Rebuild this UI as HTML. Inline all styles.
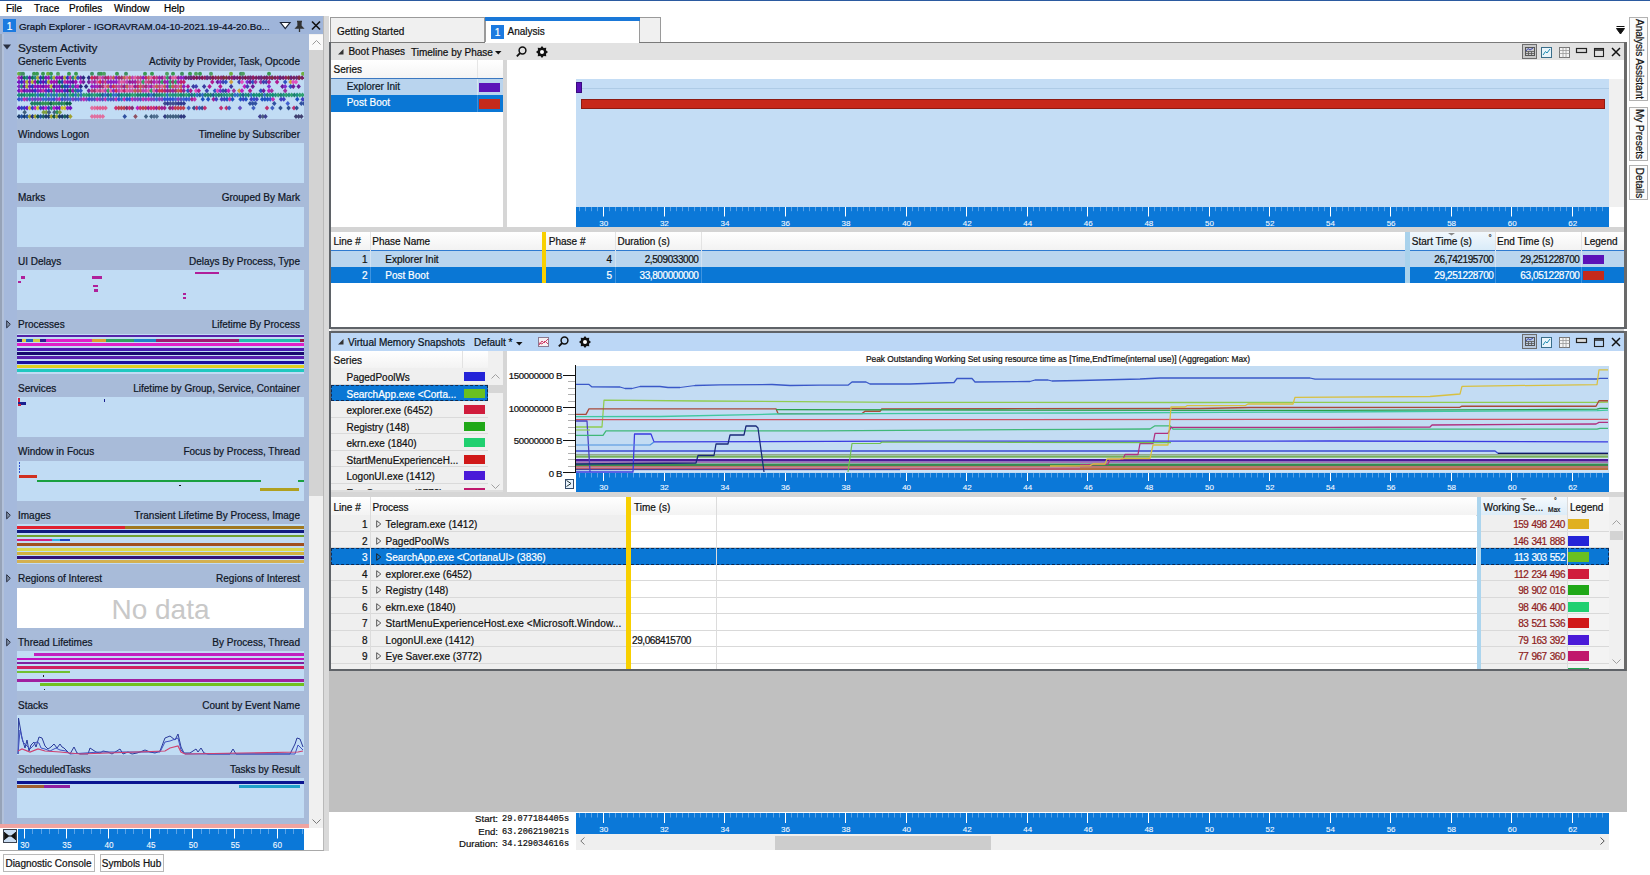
<!DOCTYPE html><html><head><meta charset="utf-8"><style>
html,body{margin:0;padding:0;}
body{width:1650px;height:875px;position:relative;overflow:hidden;background:#fff;font-family:'Liberation Sans',sans-serif;}
body>div,body>svg{position:absolute;}
.t{white-space:nowrap;line-height:1;-webkit-text-stroke:0.22px currentColor;}
svg{overflow:visible;}
</style></head><body>
<div style="left:0px;top:0px;width:1650px;height:1px;background:#2b5aa0;"></div>
<div class="t" style="left:6px;top:4.33px;font-size:10px;color:#000;font-family:'Liberation Sans';">File</div>
<div class="t" style="left:34px;top:4.33px;font-size:10px;color:#000;font-family:'Liberation Sans';">Trace</div>
<div class="t" style="left:69px;top:4.33px;font-size:10px;color:#000;font-family:'Liberation Sans';">Profiles</div>
<div class="t" style="left:114px;top:4.33px;font-size:10px;color:#000;font-family:'Liberation Sans';">Window</div>
<div class="t" style="left:164px;top:4.33px;font-size:10px;color:#000;font-family:'Liberation Sans';">Help</div>
<div style="left:0px;top:16px;width:324px;height:835px;background:#a8bbd9;"></div>
<div style="left:0px;top:16px;width:324px;height:18px;background:#9fb5da;"></div>
<div style="left:0px;top:34px;width:1.5px;height:794px;background:#96a3b8;"></div>
<div style="left:4px;top:34px;width:13px;height:790px;background:#a5b9dc;"></div>
<div style="left:1.5px;top:34px;width:2.5px;height:794px;background:#b2c1da;"></div>
<div style="left:3px;top:19px;width:13px;height:13px;background:#1c7ae0;"></div>
<div class="t" style="left:-0.5px;width:20px;text-align:center;top:22.34px;font-size:10px;color:#fff;font-family:'Liberation Sans';">1</div>
<div class="t" style="left:19px;top:22.25px;font-size:9.75px;color:#0a0f1e;font-family:'Liberation Sans';">Graph Explorer - IGORAVRAM.04-10-2021.19-44-20.Bo...</div>
<svg style="left:280px;top:22px" width="11" height="8"><path d="M0.5 0.5 L10 0.5 L5.25 6.5 Z" fill="#fff" stroke="#1a2233" stroke-width="1.2"/></svg>
<svg style="left:295px;top:21px" width="9" height="11"><path d="M2 0.5 H7 M3 0.5 V5 L1 7 H8 L6 5 V0.5 M4.5 7 V11" fill="#333" stroke="#333" stroke-width="1.3"/></svg>
<svg style="left:311px;top:21px" width="10" height="9"><path d="M1 0.5 L9 8.5 M9 0.5 L1 8.5" stroke="#111" stroke-width="1.6"/></svg>
<svg style="left:3px;top:44px" width="9" height="7"><path d="M0 0.5 H8 L4 5.5 Z" fill="#2a3040"/></svg>
<div class="t" style="left:18px;top:42.51px;font-size:11.8px;color:#0f1626;font-family:'Liberation Sans';">System Activity</div>
<div class="t" style="left:18px;top:57.33px;font-size:10px;color:#0f1626;font-family:'Liberation Sans';">Generic Events</div>
<div class="t" style="left:-300px;width:600px;text-align:right;top:57.33px;font-size:10px;color:#0f1626;font-family:'Liberation Sans';">Activity by Provider, Task, Opcode</div>
<div style="left:17px;top:71px;width:287px;height:48px;background:#c1dcf4;"></div>
<div class="t" style="left:18px;top:129.84px;font-size:10px;color:#0f1626;font-family:'Liberation Sans';">Windows Logon</div>
<div class="t" style="left:-300px;width:600px;text-align:right;top:129.84px;font-size:10px;color:#0f1626;font-family:'Liberation Sans';">Timeline by Subscriber</div>
<div style="left:17px;top:143.0px;width:287px;height:40px;background:#c1dcf4;"></div>
<div class="t" style="left:18px;top:193.34px;font-size:10px;color:#0f1626;font-family:'Liberation Sans';">Marks</div>
<div class="t" style="left:-300px;width:600px;text-align:right;top:193.34px;font-size:10px;color:#0f1626;font-family:'Liberation Sans';">Grouped By Mark</div>
<div style="left:17px;top:206.5px;width:287px;height:40px;background:#c1dcf4;"></div>
<div class="t" style="left:18px;top:256.84px;font-size:10px;color:#0f1626;font-family:'Liberation Sans';">UI Delays</div>
<div class="t" style="left:-300px;width:600px;text-align:right;top:256.84px;font-size:10px;color:#0f1626;font-family:'Liberation Sans';">Delays By Process, Type</div>
<div style="left:17px;top:270.0px;width:287px;height:40px;background:#c1dcf4;"></div>
<div class="t" style="left:18px;top:320.34px;font-size:10px;color:#0f1626;font-family:'Liberation Sans';">Processes</div>
<div class="t" style="left:-300px;width:600px;text-align:right;top:320.34px;font-size:10px;color:#0f1626;font-family:'Liberation Sans';">Lifetime By Process</div>
<svg style="left:5.5px;top:320.0px" width="5" height="9"><path d="M0.7 0.7 L4.3 4.3 L0.7 7.9 Z" fill="#8090a8" stroke="#2a3040" stroke-width="1"/></svg>
<div style="left:17px;top:333.5px;width:287px;height:40px;background:#c1dcf4;"></div>
<div class="t" style="left:18px;top:383.84px;font-size:10px;color:#0f1626;font-family:'Liberation Sans';">Services</div>
<div class="t" style="left:-300px;width:600px;text-align:right;top:383.84px;font-size:10px;color:#0f1626;font-family:'Liberation Sans';">Lifetime by Group, Service, Container</div>
<div style="left:17px;top:397.0px;width:287px;height:40px;background:#c1dcf4;"></div>
<div class="t" style="left:18px;top:447.34px;font-size:10px;color:#0f1626;font-family:'Liberation Sans';">Window in Focus</div>
<div class="t" style="left:-300px;width:600px;text-align:right;top:447.34px;font-size:10px;color:#0f1626;font-family:'Liberation Sans';">Focus by Process, Thread</div>
<div style="left:17px;top:460.5px;width:287px;height:40px;background:#c1dcf4;"></div>
<div class="t" style="left:18px;top:510.84px;font-size:10px;color:#0f1626;font-family:'Liberation Sans';">Images</div>
<div class="t" style="left:-300px;width:600px;text-align:right;top:510.84px;font-size:10px;color:#0f1626;font-family:'Liberation Sans';">Transient Lifetime By Process, Image</div>
<svg style="left:5.5px;top:510.5px" width="5" height="9"><path d="M0.7 0.7 L4.3 4.3 L0.7 7.9 Z" fill="#8090a8" stroke="#2a3040" stroke-width="1"/></svg>
<div style="left:17px;top:524.0px;width:287px;height:40px;background:#c1dcf4;"></div>
<div class="t" style="left:18px;top:574.33px;font-size:10px;color:#0f1626;font-family:'Liberation Sans';">Regions of Interest</div>
<div class="t" style="left:-300px;width:600px;text-align:right;top:574.33px;font-size:10px;color:#0f1626;font-family:'Liberation Sans';">Regions of Interest</div>
<svg style="left:5.5px;top:574.0px" width="5" height="9"><path d="M0.7 0.7 L4.3 4.3 L0.7 7.9 Z" fill="#8090a8" stroke="#2a3040" stroke-width="1"/></svg>
<div style="left:17px;top:587.5px;width:287px;height:40px;background:#ffffff;"></div>
<div class="t" style="left:18px;top:637.83px;font-size:10px;color:#0f1626;font-family:'Liberation Sans';">Thread Lifetimes</div>
<div class="t" style="left:-300px;width:600px;text-align:right;top:637.83px;font-size:10px;color:#0f1626;font-family:'Liberation Sans';">By Process, Thread</div>
<svg style="left:5.5px;top:637.5px" width="5" height="9"><path d="M0.7 0.7 L4.3 4.3 L0.7 7.9 Z" fill="#8090a8" stroke="#2a3040" stroke-width="1"/></svg>
<div style="left:17px;top:651.0px;width:287px;height:40px;background:#c1dcf4;"></div>
<div class="t" style="left:18px;top:701.33px;font-size:10px;color:#0f1626;font-family:'Liberation Sans';">Stacks</div>
<div class="t" style="left:-300px;width:600px;text-align:right;top:701.33px;font-size:10px;color:#0f1626;font-family:'Liberation Sans';">Count by Event Name</div>
<div style="left:17px;top:714.5px;width:287px;height:40px;background:#c1dcf4;"></div>
<div class="t" style="left:18px;top:764.83px;font-size:10px;color:#0f1626;font-family:'Liberation Sans';">ScheduledTasks</div>
<div class="t" style="left:-300px;width:600px;text-align:right;top:764.83px;font-size:10px;color:#0f1626;font-family:'Liberation Sans';">Tasks by Result</div>
<div style="left:17px;top:778.0px;width:287px;height:40px;background:#c1dcf4;"></div>
<div class="t" style="left:60.5px;width:200px;text-align:center;top:596.10px;font-size:28px;color:#c8c8c8;font-family:'Liberation Sans';-webkit-text-stroke:0;">No data</div>
<div style="left:309px;top:34px;width:14px;height:794px;background:#f0f0f0;"></div>
<div style="left:309px;top:35px;width:14px;height:15px;background:#fafafa;"></div>
<div style="left:309px;top:50px;width:14px;height:446px;background:#d3d3d3;"></div>
<svg style="left:312px;top:40px" width="9" height="5"><path d="M0.5 4.5 L4.5 0.5 L8.5 4.5" fill="none" stroke="#9a9a9a" stroke-width="1"/></svg>
<svg style="left:312px;top:819px" width="9" height="5"><path d="M0.5 0.5 L4.5 4.5 L8.5 0.5" fill="none" stroke="#7a7a7a" stroke-width="1"/></svg>
<div style="left:323px;top:16px;width:1px;height:835px;background:#b9b9b9;"></div>
<div style="left:0px;top:824px;width:309px;height:4px;background:#efa3a0;"></div>
<div style="left:0px;top:828px;width:323px;height:22px;background:#ffffff;"></div>
<div style="left:2px;top:828px;width:321px;height:22px;background:#ffffff;"></div>
<div style="left:3px;top:829px;width:14px;height:14px;background:#c9dcf2;box-shadow:inset 0 0 0 1px #3d4450;"></div>
<svg style="left:4px;top:831px" width="12" height="10"><path d="M0.5 1 V9 M11.5 1 V9" stroke="#222" stroke-width="1"/><path d="M1 1.5 V8.5 L5.5 5 Z M11 1.5 V8.5 L6.5 5 Z" fill="#111"/><path d="M5 5 H7" stroke="#111" stroke-width="1"/></svg>
<div style="left:0px;top:850px;width:324px;height:1px;background:#a9a9a9;"></div>
<div style="left:2.5px;top:854px;width:92px;height:18px;background:#fdfdfd;box-shadow:inset 0 0 0 1px #b8b8b8;"></div>
<div class="t" style="left:2.5px;width:92px;text-align:center;top:858.83px;font-size:10px;color:#111;font-family:'Liberation Sans';">Diagnostic Console</div>
<div style="left:99.5px;top:854px;width:64px;height:18px;background:#fdfdfd;box-shadow:inset 0 0 0 1px #b8b8b8;"></div>
<div class="t" style="left:99.5px;width:64px;text-align:center;top:858.83px;font-size:10px;color:#111;font-family:'Liberation Sans';">Symbols Hub</div>
<div style="left:324px;top:16px;width:4px;height:835px;background:#d6d6d6;"></div>
<div style="left:330px;top:17px;width:155px;height:25px;background:#f0f0f0;box-shadow:inset 1px 1px 0 #9a9a9a, inset -1px 0 0 #9a9a9a;"></div>
<div class="t" style="left:337px;top:26.94px;font-size:10px;color:#111;font-family:'Liberation Sans';">Getting Started</div>
<div style="left:485px;top:17px;width:155px;height:25px;background:#ffffff;box-shadow:inset 1px 0 0 #9a9a9a, inset -1px 0 0 #9a9a9a;"></div>
<div style="left:485px;top:17px;width:155px;height:4px;background:#1a78d8;"></div>
<div style="left:491px;top:25px;width:13px;height:14px;background:#1c7ae0;"></div>
<div class="t" style="left:487.5px;width:20px;text-align:center;top:28.34px;font-size:10px;color:#fff;font-family:'Liberation Sans';">1</div>
<div class="t" style="left:507.5px;top:27.34px;font-size:10px;color:#111;font-family:'Liberation Sans';">Analysis</div>
<div style="left:640px;top:17px;width:21px;height:25px;background:#f0f0f0;box-shadow:inset 0 1px 0 #9a9a9a, inset -1px 0 0 #9a9a9a;"></div>
<svg style="left:1616px;top:26px" width="9" height="9"><path d="M0.5 0.5 H8.5 M0.5 2.5 H8.5 L4.5 8 Z" fill="#111" stroke="#111" stroke-width="1"/></svg>
<div style="left:1629px;top:17px;width:19px;height:84px;background:#fbfbfb;box-shadow:inset 0 0 0 1px #b2b2b2;"></div>
<div class="t" style="left:1578.5px;top:53.0px;width:120px;text-align:center;font-size:10px;line-height:12px;color:#111;transform:rotate(90deg);">Analysis Assistant</div>
<div style="left:1629px;top:107px;width:19px;height:54px;background:#fbfbfb;box-shadow:inset 0 0 0 1px #b2b2b2;"></div>
<div class="t" style="left:1578.5px;top:128.0px;width:120px;text-align:center;font-size:10px;line-height:12px;color:#111;transform:rotate(90deg);">My Presets</div>
<div style="left:1629px;top:165px;width:19px;height:35px;background:#fbfbfb;box-shadow:inset 0 0 0 1px #b2b2b2;"></div>
<div class="t" style="left:1578.5px;top:176.5px;width:120px;text-align:center;font-size:10px;line-height:12px;color:#111;transform:rotate(90deg);">Details</div>
<div style="left:331px;top:42px;width:1293px;height:286px;background:#ffffff;"></div>
<div style="left:329px;top:42px;width:156px;height:1px;background:#7a7a7a;"></div>
<div style="left:639px;top:42px;width:987px;height:1px;background:#7a7a7a;"></div>
<div style="left:331px;top:43px;width:1293px;height:17px;background:#e2e2e2;"></div>
<svg style="left:338px;top:49px" width="6" height="6"><path d="M5.5 0 V5.5 H0 Z" fill="#333"/></svg>
<div class="t" style="left:348.4px;top:46.94px;font-size:10px;color:#111;font-family:'Liberation Sans';">Boot Phases</div>
<div class="t" style="left:411px;top:47.83px;font-size:10px;color:#111;font-family:'Liberation Sans';">Timeline by Phase</div>
<svg style="left:495px;top:51px" width="7" height="4"><path d="M0 0 H6.5 L3.25 3.5 Z" fill="#111"/></svg>
<svg style="left:516px;top:46px" width="11" height="11"><circle cx="6.5" cy="4.5" r="3.4" fill="none" stroke="#111" stroke-width="1.5"/><path d="M4.2 7 L0.8 10.4" stroke="#111" stroke-width="1.8"/></svg>
<svg style="left:536px;top:46px" width="12" height="12"><polygon points="12.00,6.00 9.97,7.65 10.24,10.24 7.65,9.97 6.00,12.00 4.35,9.97 1.76,10.24 2.03,7.65 0.00,6.00 2.03,4.35 1.76,1.76 4.35,2.03 6.00,0.00 7.65,2.03 10.24,1.76 9.97,4.35" fill="#111"/><circle cx="6" cy="6" r="2" fill="#fff"/></svg>
<div style="left:1522px;top:44px;width:15px;height:15px;background:#c8c8c8;box-shadow:inset 0 0 0 1px #6d6d6d;"></div>
<svg style="left:1525px;top:47px" width="10" height="9"><rect x="0.5" y="0.5" width="9" height="8" fill="none" stroke="#555" stroke-width="1"/><path d="M0.5 4.5 H9.5 M3.5 4.5 V8.5 M6.5 4.5 V8.5 M0.5 6.5 H9.5" stroke="#555" stroke-width="0.8"/><path d="M1 4 L3 1.5 L5 3 L8 1" fill="none" stroke="#3c48b0" stroke-width="1"/></svg>
<svg style="left:1541px;top:47px" width="11" height="11"><rect x="0.5" y="0.5" width="10" height="10" fill="#e8f4fb" stroke="#3a6e8a" stroke-width="1"/><path d="M2 8 L4.5 4.5 L6 6 L9 2" fill="none" stroke="#1a8ab0" stroke-width="1"/></svg>
<svg style="left:1559px;top:47px" width="11" height="11"><rect x="0.5" y="0.5" width="10" height="10" fill="#f4f4f4" stroke="#777" stroke-width="1"/><path d="M0.5 3.5 H10.5 M0.5 6.5 H10.5 M4 0.5 V10.5 M7 0.5 V10.5" stroke="#999" stroke-width="0.8"/></svg>
<svg style="left:1576px;top:48px" width="11" height="6"><rect x="0.5" y="0.5" width="10" height="4" fill="#ddd" stroke="#222" stroke-width="1.2"/></svg>
<svg style="left:1594px;top:48px" width="10" height="9"><rect x="0.5" y="0.5" width="9" height="8" fill="none" stroke="#222" stroke-width="1.1"/><path d="M0.5 2 H9.5" stroke="#222" stroke-width="1.5"/></svg>
<svg style="left:1611px;top:47px" width="10" height="10"><path d="M1 1 L9 9 M9 1 L1 9" stroke="#111" stroke-width="1.5"/></svg>
<div style="left:331px;top:60px;width:172px;height:18px;background:#fdfdfd;background:linear-gradient(#ffffff,#f4f4f4);"></div>
<div style="left:477px;top:60px;width:1px;height:18px;background:#e6e6e6;"></div>
<div class="t" style="left:333.6px;top:64.63px;font-size:10px;color:#111;font-family:'Liberation Sans';">Series</div>
<div style="left:331px;top:78px;width:172px;height:1px;background:#3c78c0;"></div>
<div style="left:331px;top:79px;width:172px;height:16px;background:#b9d4ee;"></div>
<div class="t" style="left:346.7px;top:81.73px;font-size:10px;color:#0d1a2a;font-family:'Liberation Sans';">Explorer Init</div>
<div style="left:478.5px;top:82.5px;width:21.5px;height:9.5px;background:#5b12b8;"></div>
<div style="left:331px;top:95px;width:172px;height:17px;background:#0a77d5;"></div>
<div class="t" style="left:346.7px;top:98.33px;font-size:10px;color:#ffffff;font-family:'Liberation Sans';">Post Boot</div>
<div style="left:478.5px;top:99px;width:21.5px;height:9.5px;background:#c42a1c;"></div>
<div style="left:477px;top:79px;width:1px;height:16px;background:#d7e4f0;"></div>
<div style="left:477px;top:95px;width:1px;height:17px;background:#3d8fdc;"></div>
<div style="left:503px;top:60px;width:4px;height:167px;background:#d6d6d6;"></div>
<div style="left:576px;top:79px;width:1033px;height:128px;background:#c4ddf5;"></div>
<div style="left:576px;top:88px;width:1033px;height:1px;background:#aecbe6;"></div>
<div style="left:576px;top:82px;width:6px;height:10.5px;background:#5a10b6;box-shadow:inset 0 0 0 1px #3a0a80;"></div>
<div style="left:581px;top:99px;width:1024px;height:10px;background:#c7281b;box-shadow:inset 0 0 0 1px #8e1a12;"></div>
<div style="left:1609px;top:79px;width:15px;height:128px;background:#f0f0f0;"></div>
<div style="left:576px;top:207px;width:1033px;height:20px;background:#0b78d8;"></div>
<svg style="left:576px;top:207px" width="1033" height="20"><path d="M3.5 0 V4.2 M9.5 0 V4.2 M15.5 0 V4.2 M21.5 0 V4.2 M33.5 0 V4.2 M39.5 0 V4.2 M45.5 0 V4.2 M51.5 0 V4.2 M57.5 0 V4.2 M63.5 0 V4.2 M69.5 0 V4.2 M75.5 0 V4.2 M81.5 0 V4.2 M94.5 0 V4.2 M100.5 0 V4.2 M106.5 0 V4.2 M112.5 0 V4.2 M118.5 0 V4.2 M124.5 0 V4.2 M130.5 0 V4.2 M136.5 0 V4.2 M142.5 0 V4.2 M154.5 0 V4.2 M160.5 0 V4.2 M166.5 0 V4.2 M172.5 0 V4.2 M178.5 0 V4.2 M184.5 0 V4.2 M190.5 0 V4.2 M197.5 0 V4.2 M203.5 0 V4.2 M215.5 0 V4.2 M221.5 0 V4.2 M227.5 0 V4.2 M233.5 0 V4.2 M239.5 0 V4.2 M245.5 0 V4.2 M251.5 0 V4.2 M257.5 0 V4.2 M263.5 0 V4.2 M275.5 0 V4.2 M281.5 0 V4.2 M287.5 0 V4.2 M293.5 0 V4.2 M299.5 0 V4.2 M306.5 0 V4.2 M312.5 0 V4.2 M318.5 0 V4.2 M324.5 0 V4.2 M336.5 0 V4.2 M342.5 0 V4.2 M348.5 0 V4.2 M354.5 0 V4.2 M360.5 0 V4.2 M366.5 0 V4.2 M372.5 0 V4.2 M378.5 0 V4.2 M384.5 0 V4.2 M396.5 0 V4.2 M402.5 0 V4.2 M408.5 0 V4.2 M415.5 0 V4.2 M421.5 0 V4.2 M427.5 0 V4.2 M433.5 0 V4.2 M439.5 0 V4.2 M445.5 0 V4.2 M457.5 0 V4.2 M463.5 0 V4.2 M469.5 0 V4.2 M475.5 0 V4.2 M481.5 0 V4.2 M487.5 0 V4.2 M493.5 0 V4.2 M499.5 0 V4.2 M505.5 0 V4.2 M517.5 0 V4.2 M524.5 0 V4.2 M530.5 0 V4.2 M536.5 0 V4.2 M542.5 0 V4.2 M548.5 0 V4.2 M554.5 0 V4.2 M560.5 0 V4.2 M566.5 0 V4.2 M578.5 0 V4.2 M584.5 0 V4.2 M590.5 0 V4.2 M596.5 0 V4.2 M602.5 0 V4.2 M608.5 0 V4.2 M614.5 0 V4.2 M620.5 0 V4.2 M626.5 0 V4.2 M639.5 0 V4.2 M645.5 0 V4.2 M651.5 0 V4.2 M657.5 0 V4.2 M663.5 0 V4.2 M669.5 0 V4.2 M675.5 0 V4.2 M681.5 0 V4.2 M687.5 0 V4.2 M699.5 0 V4.2 M705.5 0 V4.2 M711.5 0 V4.2 M717.5 0 V4.2 M723.5 0 V4.2 M729.5 0 V4.2 M736.5 0 V4.2 M742.5 0 V4.2 M748.5 0 V4.2 M760.5 0 V4.2 M766.5 0 V4.2 M772.5 0 V4.2 M778.5 0 V4.2 M784.5 0 V4.2 M790.5 0 V4.2 M796.5 0 V4.2 M802.5 0 V4.2 M808.5 0 V4.2 M820.5 0 V4.2 M826.5 0 V4.2 M832.5 0 V4.2 M838.5 0 V4.2 M845.5 0 V4.2 M851.5 0 V4.2 M857.5 0 V4.2 M863.5 0 V4.2 M869.5 0 V4.2 M881.5 0 V4.2 M887.5 0 V4.2 M893.5 0 V4.2 M899.5 0 V4.2 M905.5 0 V4.2 M911.5 0 V4.2 M917.5 0 V4.2 M923.5 0 V4.2 M929.5 0 V4.2 M941.5 0 V4.2 M947.5 0 V4.2 M954.5 0 V4.2 M960.5 0 V4.2 M966.5 0 V4.2 M972.5 0 V4.2 M978.5 0 V4.2 M984.5 0 V4.2 M990.5 0 V4.2 M1002.5 0 V4.2 M1008.5 0 V4.2 M1014.5 0 V4.2 M1020.5 0 V4.2 M1026.5 0 V4.2" stroke="#5aa2e6" stroke-width="1"/><path d="M27.5 0 V9.5 M88.5 0 V9.5 M148.5 0 V9.5 M209.5 0 V9.5 M269.5 0 V9.5 M330.5 0 V9.5 M390.5 0 V9.5 M451.5 0 V9.5 M511.5 0 V9.5 M572.5 0 V9.5 M633.5 0 V9.5 M693.5 0 V9.5 M754.5 0 V9.5 M814.5 0 V9.5 M875.5 0 V9.5 M935.5 0 V9.5 M996.5 0 V9.5" stroke="#ffffff" stroke-width="1"/></svg>
<div class="t" style="left:588.8px;width:30px;text-align:center;top:219.83px;font-size:8px;color:#f4f9ff;font-family:'Liberation Sans';-webkit-text-stroke:0.1px currentColor;">30</div>
<div class="t" style="left:649.3599999999999px;width:30px;text-align:center;top:219.83px;font-size:8px;color:#f4f9ff;font-family:'Liberation Sans';-webkit-text-stroke:0.1px currentColor;">32</div>
<div class="t" style="left:709.92px;width:30px;text-align:center;top:219.83px;font-size:8px;color:#f4f9ff;font-family:'Liberation Sans';-webkit-text-stroke:0.1px currentColor;">34</div>
<div class="t" style="left:770.48px;width:30px;text-align:center;top:219.83px;font-size:8px;color:#f4f9ff;font-family:'Liberation Sans';-webkit-text-stroke:0.1px currentColor;">36</div>
<div class="t" style="left:831.04px;width:30px;text-align:center;top:219.83px;font-size:8px;color:#f4f9ff;font-family:'Liberation Sans';-webkit-text-stroke:0.1px currentColor;">38</div>
<div class="t" style="left:891.5999999999999px;width:30px;text-align:center;top:219.83px;font-size:8px;color:#f4f9ff;font-family:'Liberation Sans';-webkit-text-stroke:0.1px currentColor;">40</div>
<div class="t" style="left:952.16px;width:30px;text-align:center;top:219.83px;font-size:8px;color:#f4f9ff;font-family:'Liberation Sans';-webkit-text-stroke:0.1px currentColor;">42</div>
<div class="t" style="left:1012.72px;width:30px;text-align:center;top:219.83px;font-size:8px;color:#f4f9ff;font-family:'Liberation Sans';-webkit-text-stroke:0.1px currentColor;">44</div>
<div class="t" style="left:1073.28px;width:30px;text-align:center;top:219.83px;font-size:8px;color:#f4f9ff;font-family:'Liberation Sans';-webkit-text-stroke:0.1px currentColor;">46</div>
<div class="t" style="left:1133.84px;width:30px;text-align:center;top:219.83px;font-size:8px;color:#f4f9ff;font-family:'Liberation Sans';-webkit-text-stroke:0.1px currentColor;">48</div>
<div class="t" style="left:1194.4px;width:30px;text-align:center;top:219.83px;font-size:8px;color:#f4f9ff;font-family:'Liberation Sans';-webkit-text-stroke:0.1px currentColor;">50</div>
<div class="t" style="left:1254.96px;width:30px;text-align:center;top:219.83px;font-size:8px;color:#f4f9ff;font-family:'Liberation Sans';-webkit-text-stroke:0.1px currentColor;">52</div>
<div class="t" style="left:1315.52px;width:30px;text-align:center;top:219.83px;font-size:8px;color:#f4f9ff;font-family:'Liberation Sans';-webkit-text-stroke:0.1px currentColor;">54</div>
<div class="t" style="left:1376.08px;width:30px;text-align:center;top:219.83px;font-size:8px;color:#f4f9ff;font-family:'Liberation Sans';-webkit-text-stroke:0.1px currentColor;">56</div>
<div class="t" style="left:1436.6399999999999px;width:30px;text-align:center;top:219.83px;font-size:8px;color:#f4f9ff;font-family:'Liberation Sans';-webkit-text-stroke:0.1px currentColor;">58</div>
<div class="t" style="left:1497.2px;width:30px;text-align:center;top:219.83px;font-size:8px;color:#f4f9ff;font-family:'Liberation Sans';-webkit-text-stroke:0.1px currentColor;">60</div>
<div class="t" style="left:1557.76px;width:30px;text-align:center;top:219.83px;font-size:8px;color:#f4f9ff;font-family:'Liberation Sans';-webkit-text-stroke:0.1px currentColor;">62</div>
<div style="left:331px;top:227px;width:1293px;height:5px;background:#d4d4d4;"></div>
<div style="left:331px;top:232px;width:1293px;height:18px;background:#fafafa;background:linear-gradient(#ffffff,#f2f2f2);"></div>
<div style="left:331px;top:250px;width:1293px;height:1px;background:#2f7ad0;"></div>
<div style="left:370px;top:232px;width:1px;height:51px;background:#e3e3e3;"></div>
<div style="left:614.5px;top:232px;width:1px;height:51px;background:#e3e3e3;"></div>
<div style="left:700.5px;top:232px;width:1px;height:51px;background:#e3e3e3;"></div>
<div style="left:1495px;top:232px;width:1px;height:51px;background:#e3e3e3;"></div>
<div style="left:1581px;top:232px;width:1px;height:51px;background:#e3e3e3;"></div>
<div style="left:1410px;top:232px;width:85px;height:18px;background:#e4f0fa;background:linear-gradient(#f2f8fd,#d9ebf8);"></div>
<div class="t" style="left:333.5px;top:237.03px;font-size:10px;color:#111;font-family:'Liberation Sans';">Line #</div>
<div class="t" style="left:372.3px;top:237.03px;font-size:10px;color:#111;font-family:'Liberation Sans';">Phase Name</div>
<div class="t" style="left:548.8px;top:237.03px;font-size:10px;color:#111;font-family:'Liberation Sans';">Phase #</div>
<div class="t" style="left:617.5px;top:237.03px;font-size:10px;color:#111;font-family:'Liberation Sans';">Duration (s)</div>
<div class="t" style="left:1411.8px;top:237.03px;font-size:10px;color:#111;font-family:'Liberation Sans';">Start Time (s)</div>
<div class="t" style="left:1497px;top:237.03px;font-size:10px;color:#111;font-family:'Liberation Sans';">End Time (s)</div>
<div class="t" style="left:1584.2px;top:237.03px;font-size:10px;color:#111;font-family:'Liberation Sans';">Legend</div>
<svg style="left:1448px;top:233px" width="8" height="3"><path d="M0 0 H7 L3.5 2.5 Z" fill="#888"/></svg>
<div class="t" style="left:1485.0px;width:10px;text-align:center;top:234.03px;font-size:8px;color:#333;font-family:'Liberation Sans';">°</div>
<div style="left:331px;top:251px;width:1074px;height:16px;background:#bad5ee;"></div>
<div style="left:1410px;top:251px;width:214px;height:16px;background:#bad5ee;"></div>
<div style="left:331px;top:267px;width:1074px;height:16px;background:#0a77d5;"></div>
<div style="left:1410px;top:267px;width:214px;height:16px;background:#0a77d5;"></div>
<div style="left:370px;top:251px;width:1px;height:16px;background:#d2e2f2;"></div>
<div style="left:370px;top:267px;width:1px;height:16px;background:#3f94e0;"></div>
<div style="left:614.5px;top:251px;width:1px;height:16px;background:#d2e2f2;"></div>
<div style="left:614.5px;top:267px;width:1px;height:16px;background:#3f94e0;"></div>
<div style="left:700.5px;top:251px;width:1px;height:16px;background:#d2e2f2;"></div>
<div style="left:700.5px;top:267px;width:1px;height:16px;background:#3f94e0;"></div>
<div style="left:1495px;top:251px;width:1px;height:16px;background:#d2e2f2;"></div>
<div style="left:1495px;top:267px;width:1px;height:16px;background:#3f94e0;"></div>
<div style="left:1581px;top:251px;width:1px;height:16px;background:#d2e2f2;"></div>
<div style="left:1581px;top:267px;width:1px;height:16px;background:#3f94e0;"></div>
<div class="t" style="left:-232.5px;width:600px;text-align:right;top:254.64px;font-size:10px;color:#111;font-family:'Liberation Sans';">1</div>
<div class="t" style="left:-232.5px;width:600px;text-align:right;top:271.14px;font-size:10px;color:#fff;font-family:'Liberation Sans';">2</div>
<div class="t" style="left:385.3px;top:254.64px;font-size:10px;color:#111;font-family:'Liberation Sans';">Explorer Init</div>
<div class="t" style="left:385.3px;top:271.14px;font-size:10px;color:#fff;font-family:'Liberation Sans';">Post Boot</div>
<div class="t" style="left:12px;width:600px;text-align:right;top:254.64px;font-size:10px;color:#111;font-family:'Liberation Sans';">4</div>
<div class="t" style="left:12px;width:600px;text-align:right;top:271.14px;font-size:10px;color:#fff;font-family:'Liberation Sans';">5</div>
<div class="t" style="left:98.5px;width:600px;text-align:right;top:254.64px;font-size:10px;color:#111;font-family:'Liberation Sans';letter-spacing:-0.42px;">2,509033000</div>
<div class="t" style="left:98.5px;width:600px;text-align:right;top:271.14px;font-size:10px;color:#fff;font-family:'Liberation Sans';letter-spacing:-0.42px;">33,800000000</div>
<div class="t" style="left:893.5px;width:600px;text-align:right;top:254.64px;font-size:10px;color:#111;font-family:'Liberation Sans';letter-spacing:-0.4px;">26,742195700</div>
<div class="t" style="left:893.5px;width:600px;text-align:right;top:271.14px;font-size:10px;color:#fff;font-family:'Liberation Sans';letter-spacing:-0.4px;">29,251228700</div>
<div class="t" style="left:979.5px;width:600px;text-align:right;top:254.64px;font-size:10px;color:#111;font-family:'Liberation Sans';letter-spacing:-0.4px;">29,251228700</div>
<div class="t" style="left:979.5px;width:600px;text-align:right;top:271.14px;font-size:10px;color:#fff;font-family:'Liberation Sans';letter-spacing:-0.4px;">63,051228700</div>
<div style="left:1583px;top:254.5px;width:20.5px;height:9.5px;background:#5b12b8;"></div>
<div style="left:1583px;top:270.5px;width:20.5px;height:9.5px;background:#c42a1c;"></div>
<div style="left:542px;top:232px;width:4px;height:51px;background:#f8d000;"></div>
<div style="left:1405px;top:232px;width:5px;height:51px;background:#a9d2ec;"></div>
<div style="left:329px;top:42px;width:2px;height:286.5px;background:#5f6368;"></div>
<div style="left:1624px;top:42px;width:2.5px;height:286.5px;background:#6a6a6a;"></div>
<div style="left:329px;top:326.5px;width:1297px;height:2px;background:#5f6368;"></div>
<div style="left:331px;top:328.5px;width:1293px;height:2.5px;background:#d2d2d2;"></div>
<div style="left:323.5px;top:16px;width:5px;height:835px;background:#d9d9d9;"></div>
<div style="left:331px;top:333px;width:1293px;height:338px;background:#ffffff;"></div>
<div style="left:329px;top:331px;width:1297px;height:2px;background:#5f6368;"></div>
<div style="left:331px;top:333px;width:1293px;height:18px;background:#bcd7f6;"></div>
<svg style="left:338px;top:339px" width="6" height="6"><path d="M5.5 0 V5.5 H0 Z" fill="#333"/></svg>
<div class="t" style="left:348px;top:337.84px;font-size:10px;color:#0b1422;font-family:'Liberation Sans';">Virtual Memory Snapshots</div>
<div class="t" style="left:474px;top:338.34px;font-size:10px;color:#0b1422;font-family:'Liberation Sans';">Default *</div>
<svg style="left:516px;top:342px" width="7" height="4"><path d="M0 0 H6.5 L3.25 3.5 Z" fill="#111"/></svg>
<svg style="left:538px;top:337px" width="11" height="10"><rect x="0.5" y="0.5" width="10" height="9" fill="#f6eef2" stroke="#8a7a90" stroke-width="1"/><path d="M1 8 L4 4 L6 6 L10 2 M1 6 L4 7 L7 4 L10 7" fill="none" stroke="#d0406a" stroke-width="1"/></svg>
<svg style="left:558px;top:336px" width="11" height="11"><circle cx="6.5" cy="4.5" r="3.4" fill="none" stroke="#111" stroke-width="1.5"/><path d="M4.2 7 L0.8 10.4" stroke="#111" stroke-width="1.8"/></svg>
<svg style="left:579px;top:336px" width="12" height="12"><polygon points="12.00,6.00 9.97,7.65 10.24,10.24 7.65,9.97 6.00,12.00 4.35,9.97 1.76,10.24 2.03,7.65 0.00,6.00 2.03,4.35 1.76,1.76 4.35,2.03 6.00,0.00 7.65,2.03 10.24,1.76 9.97,4.35" fill="#111"/><circle cx="6" cy="6" r="2" fill="#fff"/></svg>
<div style="left:1522px;top:334px;width:15px;height:15px;background:#b9c9de;box-shadow:inset 0 0 0 1px #6d6d6d;"></div>
<svg style="left:1525px;top:337px" width="10" height="9"><rect x="0.5" y="0.5" width="9" height="8" fill="none" stroke="#555" stroke-width="1"/><path d="M0.5 4.5 H9.5 M3.5 4.5 V8.5 M6.5 4.5 V8.5 M0.5 6.5 H9.5" stroke="#555" stroke-width="0.8"/><path d="M1 4 L3 1.5 L5 3 L8 1" fill="none" stroke="#3c48b0" stroke-width="1"/></svg>
<svg style="left:1541px;top:337px" width="11" height="11"><rect x="0.5" y="0.5" width="10" height="10" fill="#e8f4fb" stroke="#3a6e8a" stroke-width="1"/><path d="M2 8 L4.5 4.5 L6 6 L9 2" fill="none" stroke="#1a8ab0" stroke-width="1"/></svg>
<svg style="left:1559px;top:337px" width="11" height="11"><rect x="0.5" y="0.5" width="10" height="10" fill="#f4f4f4" stroke="#777" stroke-width="1"/><path d="M0.5 3.5 H10.5 M0.5 6.5 H10.5 M4 0.5 V10.5 M7 0.5 V10.5" stroke="#999" stroke-width="0.8"/></svg>
<svg style="left:1576px;top:338px" width="11" height="6"><rect x="0.5" y="0.5" width="10" height="4" fill="#ddd" stroke="#222" stroke-width="1.2"/></svg>
<svg style="left:1594px;top:338px" width="10" height="9"><rect x="0.5" y="0.5" width="9" height="8" fill="none" stroke="#222" stroke-width="1.1"/><path d="M0.5 2 H9.5" stroke="#222" stroke-width="1.5"/></svg>
<svg style="left:1611px;top:337px" width="10" height="10"><path d="M1 1 L9 9 M9 1 L1 9" stroke="#111" stroke-width="1.5"/></svg>
<div style="left:331px;top:351px;width:157px;height:17px;background:#fbfbfb;background:linear-gradient(#ffffff,#f3f3f3);"></div>
<div style="left:462px;top:351px;width:1px;height:141px;background:#e2e2e2;"></div>
<div class="t" style="left:333.6px;top:355.64px;font-size:10px;color:#111;font-family:'Liberation Sans';">Series</div>
<div style="left:331px;top:368px;width:157px;height:17px;background:#efefef;"></div>
<div style="left:331px;top:384px;width:157px;height:1px;background:#dadada;"></div>
<div class="t" style="left:346.5px;top:372.84px;font-size:10px;color:#111;font-family:'Liberation Sans';">PagedPoolWs</div>
<div style="left:464px;top:371.5px;width:21px;height:9.5px;background:#2424d8;"></div>
<div style="left:331px;top:385px;width:157px;height:16px;background:#0a77d5;"></div>
<div class="t" style="left:346.5px;top:389.84px;font-size:10px;color:#fff;font-family:'Liberation Sans';">SearchApp.exe &lt;Corta...</div>
<div style="left:464px;top:388.5px;width:21px;height:9.5px;background:#6ac020;"></div>
<div style="left:331px;top:385px;width:157px;height:16px;box-sizing:border-box;border:1px dashed #0d2a55;"></div>
<div style="left:331px;top:401px;width:157px;height:17px;background:#efefef;"></div>
<div style="left:331px;top:417px;width:157px;height:1px;background:#dadada;"></div>
<div class="t" style="left:346.5px;top:405.84px;font-size:10px;color:#111;font-family:'Liberation Sans';">explorer.exe (6452)</div>
<div style="left:464px;top:404.5px;width:21px;height:9.5px;background:#d01c3c;"></div>
<div style="left:331px;top:418px;width:157px;height:16px;background:#efefef;"></div>
<div style="left:331px;top:433px;width:157px;height:1px;background:#dadada;"></div>
<div class="t" style="left:346.5px;top:422.84px;font-size:10px;color:#111;font-family:'Liberation Sans';">Registry (148)</div>
<div style="left:464px;top:421.5px;width:21px;height:9.5px;background:#20a818;"></div>
<div style="left:331px;top:434px;width:157px;height:17px;background:#efefef;"></div>
<div style="left:331px;top:450px;width:157px;height:1px;background:#dadada;"></div>
<div class="t" style="left:346.5px;top:438.84px;font-size:10px;color:#111;font-family:'Liberation Sans';">ekrn.exe (1840)</div>
<div style="left:464px;top:437.5px;width:21px;height:9.5px;background:#20d070;"></div>
<div style="left:331px;top:451px;width:157px;height:16px;background:#efefef;"></div>
<div style="left:331px;top:466px;width:157px;height:1px;background:#dadada;"></div>
<div class="t" style="left:346.5px;top:455.84px;font-size:10px;color:#111;font-family:'Liberation Sans';">StartMenuExperienceH...</div>
<div style="left:464px;top:454.5px;width:21px;height:9.5px;background:#d01818;"></div>
<div style="left:331px;top:467px;width:157px;height:17px;background:#efefef;"></div>
<div style="left:331px;top:483px;width:157px;height:1px;background:#dadada;"></div>
<div class="t" style="left:346.5px;top:471.84px;font-size:10px;color:#111;font-family:'Liberation Sans';">LogonUI.exe (1412)</div>
<div style="left:464px;top:470.5px;width:21px;height:9.5px;background:#4a1ad8;"></div>
<div style="left:331px;top:484px;width:157px;height:8px;background:#efefef;"></div>
<div class="t" style="left:346.5px;top:488.84px;font-size:10px;color:#111;font-family:'Liberation Sans';">Eye Saver.exe (3772)</div>
<div style="left:464px;top:487.5px;width:21px;height:9.5px;background:#c0186c;"></div>
<div style="left:488px;top:351px;width:15px;height:141px;background:#f0f0f0;"></div>
<div style="left:488px;top:385px;width:15px;height:8px;background:#d6d6d6;"></div>
<svg style="left:491px;top:374px" width="9" height="5"><path d="M0.5 4.5 L4.5 0.5 L8.5 4.5" fill="none" stroke="#a0a0a0" stroke-width="1"/></svg>
<svg style="left:491px;top:484px" width="9" height="5"><path d="M0.5 0.5 L4.5 4.5 L8.5 0.5" fill="none" stroke="#a0a0a0" stroke-width="1"/></svg>
<div style="left:331px;top:490px;width:172px;height:2px;background:#dedede;"></div>
<div style="left:503px;top:351px;width:4px;height:141px;background:#d6d6d6;"></div>
<div class="t" style="left:758.0px;width:600px;text-align:center;top:354.69px;font-size:8.4px;color:#111;font-family:'Liberation Sans';">Peak Outstanding Working Set using resource time as [Time,EndTime(internal use)] (Aggregation: Max)</div>
<div style="left:576px;top:365.5px;width:1033px;height:107px;background:#c3dcf3;"></div>
<div style="left:575px;top:365px;width:1px;height:108px;background:#111;"></div>
<div style="left:563px;top:374.5px;width:12px;height:1.2px;background:#111;"></div>
<div class="t" style="left:-38px;width:600px;text-align:right;top:371.27px;font-size:9.6px;color:#111;font-family:'Liberation Sans';letter-spacing:-0.35px;">150000000 B</div>
<div style="left:563px;top:407.0px;width:12px;height:1.2px;background:#111;"></div>
<div class="t" style="left:-38px;width:600px;text-align:right;top:403.77px;font-size:9.6px;color:#111;font-family:'Liberation Sans';letter-spacing:-0.35px;">100000000 B</div>
<div style="left:563px;top:439.5px;width:12px;height:1.2px;background:#111;"></div>
<div class="t" style="left:-38px;width:600px;text-align:right;top:436.27px;font-size:9.6px;color:#111;font-family:'Liberation Sans';letter-spacing:-0.35px;">50000000 B</div>
<div style="left:563px;top:472.0px;width:12px;height:1.2px;background:#111;"></div>
<div class="t" style="left:-38px;width:600px;text-align:right;top:468.77px;font-size:9.6px;color:#111;font-family:'Liberation Sans';letter-spacing:-0.35px;">0 B</div>
<div style="left:568px;top:465.5px;width:7px;height:1px;background:#b0b0b0;"></div>
<div style="left:568px;top:459.0px;width:7px;height:1px;background:#b0b0b0;"></div>
<div style="left:568px;top:452.5px;width:7px;height:1px;background:#b0b0b0;"></div>
<div style="left:568px;top:446.0px;width:7px;height:1px;background:#b0b0b0;"></div>
<div style="left:568px;top:433.0px;width:7px;height:1px;background:#b0b0b0;"></div>
<div style="left:568px;top:426.5px;width:7px;height:1px;background:#b0b0b0;"></div>
<div style="left:568px;top:420.0px;width:7px;height:1px;background:#b0b0b0;"></div>
<div style="left:568px;top:413.5px;width:7px;height:1px;background:#b0b0b0;"></div>
<div style="left:568px;top:400.5px;width:7px;height:1px;background:#b0b0b0;"></div>
<div style="left:568px;top:394.0px;width:7px;height:1px;background:#b0b0b0;"></div>
<div style="left:568px;top:387.5px;width:7px;height:1px;background:#b0b0b0;"></div>
<div style="left:568px;top:381.0px;width:7px;height:1px;background:#b0b0b0;"></div>
<div style="left:564.5px;top:478.5px;width:9px;height:10px;background:#e8f2fc;box-shadow:inset 0 0 0 1px #324a6a;"></div>
<svg style="left:566px;top:480px" width="6" height="7"><path d="M0.5 0.5 L5 3.5 L0.5 6.5" fill="none" stroke="#233" stroke-width="1"/></svg>
<div style="left:576px;top:472.5px;width:1033px;height:19.5px;background:#0b78d8;"></div>
<svg style="left:576px;top:472.5px" width="1033" height="19.5"><path d="M3.5 0 V4.5 M9.5 0 V4.5 M15.5 0 V4.5 M21.5 0 V4.5 M33.5 0 V4.5 M39.5 0 V4.5 M45.5 0 V4.5 M51.5 0 V4.5 M57.5 0 V4.5 M63.5 0 V4.5 M69.5 0 V4.5 M75.5 0 V4.5 M81.5 0 V4.5 M94.5 0 V4.5 M100.5 0 V4.5 M106.5 0 V4.5 M112.5 0 V4.5 M118.5 0 V4.5 M124.5 0 V4.5 M130.5 0 V4.5 M136.5 0 V4.5 M142.5 0 V4.5 M154.5 0 V4.5 M160.5 0 V4.5 M166.5 0 V4.5 M172.5 0 V4.5 M178.5 0 V4.5 M184.5 0 V4.5 M190.5 0 V4.5 M197.5 0 V4.5 M203.5 0 V4.5 M215.5 0 V4.5 M221.5 0 V4.5 M227.5 0 V4.5 M233.5 0 V4.5 M239.5 0 V4.5 M245.5 0 V4.5 M251.5 0 V4.5 M257.5 0 V4.5 M263.5 0 V4.5 M275.5 0 V4.5 M281.5 0 V4.5 M287.5 0 V4.5 M293.5 0 V4.5 M299.5 0 V4.5 M306.5 0 V4.5 M312.5 0 V4.5 M318.5 0 V4.5 M324.5 0 V4.5 M336.5 0 V4.5 M342.5 0 V4.5 M348.5 0 V4.5 M354.5 0 V4.5 M360.5 0 V4.5 M366.5 0 V4.5 M372.5 0 V4.5 M378.5 0 V4.5 M384.5 0 V4.5 M396.5 0 V4.5 M402.5 0 V4.5 M408.5 0 V4.5 M415.5 0 V4.5 M421.5 0 V4.5 M427.5 0 V4.5 M433.5 0 V4.5 M439.5 0 V4.5 M445.5 0 V4.5 M457.5 0 V4.5 M463.5 0 V4.5 M469.5 0 V4.5 M475.5 0 V4.5 M481.5 0 V4.5 M487.5 0 V4.5 M493.5 0 V4.5 M499.5 0 V4.5 M505.5 0 V4.5 M517.5 0 V4.5 M524.5 0 V4.5 M530.5 0 V4.5 M536.5 0 V4.5 M542.5 0 V4.5 M548.5 0 V4.5 M554.5 0 V4.5 M560.5 0 V4.5 M566.5 0 V4.5 M578.5 0 V4.5 M584.5 0 V4.5 M590.5 0 V4.5 M596.5 0 V4.5 M602.5 0 V4.5 M608.5 0 V4.5 M614.5 0 V4.5 M620.5 0 V4.5 M626.5 0 V4.5 M639.5 0 V4.5 M645.5 0 V4.5 M651.5 0 V4.5 M657.5 0 V4.5 M663.5 0 V4.5 M669.5 0 V4.5 M675.5 0 V4.5 M681.5 0 V4.5 M687.5 0 V4.5 M699.5 0 V4.5 M705.5 0 V4.5 M711.5 0 V4.5 M717.5 0 V4.5 M723.5 0 V4.5 M729.5 0 V4.5 M736.5 0 V4.5 M742.5 0 V4.5 M748.5 0 V4.5 M760.5 0 V4.5 M766.5 0 V4.5 M772.5 0 V4.5 M778.5 0 V4.5 M784.5 0 V4.5 M790.5 0 V4.5 M796.5 0 V4.5 M802.5 0 V4.5 M808.5 0 V4.5 M820.5 0 V4.5 M826.5 0 V4.5 M832.5 0 V4.5 M838.5 0 V4.5 M845.5 0 V4.5 M851.5 0 V4.5 M857.5 0 V4.5 M863.5 0 V4.5 M869.5 0 V4.5 M881.5 0 V4.5 M887.5 0 V4.5 M893.5 0 V4.5 M899.5 0 V4.5 M905.5 0 V4.5 M911.5 0 V4.5 M917.5 0 V4.5 M923.5 0 V4.5 M929.5 0 V4.5 M941.5 0 V4.5 M947.5 0 V4.5 M954.5 0 V4.5 M960.5 0 V4.5 M966.5 0 V4.5 M972.5 0 V4.5 M978.5 0 V4.5 M984.5 0 V4.5 M990.5 0 V4.5 M1002.5 0 V4.5 M1008.5 0 V4.5 M1014.5 0 V4.5 M1020.5 0 V4.5 M1026.5 0 V4.5" stroke="#5aa2e6" stroke-width="1"/><path d="M27.5 0 V8 M88.5 0 V8 M148.5 0 V8 M209.5 0 V8 M269.5 0 V8 M330.5 0 V8 M390.5 0 V8 M451.5 0 V8 M511.5 0 V8 M572.5 0 V8 M633.5 0 V8 M693.5 0 V8 M754.5 0 V8 M814.5 0 V8 M875.5 0 V8 M935.5 0 V8 M996.5 0 V8" stroke="#ffffff" stroke-width="1"/></svg>
<div class="t" style="left:588.8px;width:30px;text-align:center;top:484.33px;font-size:8px;color:#f4f9ff;font-family:'Liberation Sans';-webkit-text-stroke:0.1px currentColor;">30</div>
<div class="t" style="left:649.3599999999999px;width:30px;text-align:center;top:484.33px;font-size:8px;color:#f4f9ff;font-family:'Liberation Sans';-webkit-text-stroke:0.1px currentColor;">32</div>
<div class="t" style="left:709.92px;width:30px;text-align:center;top:484.33px;font-size:8px;color:#f4f9ff;font-family:'Liberation Sans';-webkit-text-stroke:0.1px currentColor;">34</div>
<div class="t" style="left:770.48px;width:30px;text-align:center;top:484.33px;font-size:8px;color:#f4f9ff;font-family:'Liberation Sans';-webkit-text-stroke:0.1px currentColor;">36</div>
<div class="t" style="left:831.04px;width:30px;text-align:center;top:484.33px;font-size:8px;color:#f4f9ff;font-family:'Liberation Sans';-webkit-text-stroke:0.1px currentColor;">38</div>
<div class="t" style="left:891.5999999999999px;width:30px;text-align:center;top:484.33px;font-size:8px;color:#f4f9ff;font-family:'Liberation Sans';-webkit-text-stroke:0.1px currentColor;">40</div>
<div class="t" style="left:952.16px;width:30px;text-align:center;top:484.33px;font-size:8px;color:#f4f9ff;font-family:'Liberation Sans';-webkit-text-stroke:0.1px currentColor;">42</div>
<div class="t" style="left:1012.72px;width:30px;text-align:center;top:484.33px;font-size:8px;color:#f4f9ff;font-family:'Liberation Sans';-webkit-text-stroke:0.1px currentColor;">44</div>
<div class="t" style="left:1073.28px;width:30px;text-align:center;top:484.33px;font-size:8px;color:#f4f9ff;font-family:'Liberation Sans';-webkit-text-stroke:0.1px currentColor;">46</div>
<div class="t" style="left:1133.84px;width:30px;text-align:center;top:484.33px;font-size:8px;color:#f4f9ff;font-family:'Liberation Sans';-webkit-text-stroke:0.1px currentColor;">48</div>
<div class="t" style="left:1194.4px;width:30px;text-align:center;top:484.33px;font-size:8px;color:#f4f9ff;font-family:'Liberation Sans';-webkit-text-stroke:0.1px currentColor;">50</div>
<div class="t" style="left:1254.96px;width:30px;text-align:center;top:484.33px;font-size:8px;color:#f4f9ff;font-family:'Liberation Sans';-webkit-text-stroke:0.1px currentColor;">52</div>
<div class="t" style="left:1315.52px;width:30px;text-align:center;top:484.33px;font-size:8px;color:#f4f9ff;font-family:'Liberation Sans';-webkit-text-stroke:0.1px currentColor;">54</div>
<div class="t" style="left:1376.08px;width:30px;text-align:center;top:484.33px;font-size:8px;color:#f4f9ff;font-family:'Liberation Sans';-webkit-text-stroke:0.1px currentColor;">56</div>
<div class="t" style="left:1436.6399999999999px;width:30px;text-align:center;top:484.33px;font-size:8px;color:#f4f9ff;font-family:'Liberation Sans';-webkit-text-stroke:0.1px currentColor;">58</div>
<div class="t" style="left:1497.2px;width:30px;text-align:center;top:484.33px;font-size:8px;color:#f4f9ff;font-family:'Liberation Sans';-webkit-text-stroke:0.1px currentColor;">60</div>
<div class="t" style="left:1557.76px;width:30px;text-align:center;top:484.33px;font-size:8px;color:#f4f9ff;font-family:'Liberation Sans';-webkit-text-stroke:0.1px currentColor;">62</div>
<div style="left:1609px;top:365px;width:15px;height:127px;background:#ffffff;"></div>
<div style="left:331px;top:492px;width:1293px;height:5px;background:#d6d6d6;"></div>
<div style="left:331px;top:497px;width:1293px;height:18px;background:#fafafa;background:linear-gradient(#ffffff,#f3f3f3);"></div>
<div style="left:331px;top:514.5px;width:1278px;height:0.6px;background:#d9d9d9;"></div>
<div class="t" style="left:333.5px;top:502.94px;font-size:10px;color:#111;font-family:'Liberation Sans';">Line #</div>
<div class="t" style="left:372.5px;top:502.94px;font-size:10px;color:#111;font-family:'Liberation Sans';">Process</div>
<div class="t" style="left:634px;top:502.94px;font-size:10px;color:#111;font-family:'Liberation Sans';">Time (s)</div>
<div style="left:1481px;top:497px;width:86px;height:18px;background:#e6f1fa;background:linear-gradient(#f4f9fd,#dcecf8);"></div>
<div class="t" style="left:1483.5px;top:502.94px;font-size:10px;color:#111;font-family:'Liberation Sans';">Working Se...</div>
<div class="t" style="left:1548px;top:507.30px;font-size:6.5px;color:#111;font-family:'Liberation Sans';">Max</div>
<div class="t" style="left:1554px;top:497.37px;font-size:7px;color:#333;font-family:'Liberation Sans';">°</div>
<svg style="left:1520px;top:498px" width="8" height="3"><path d="M0 0 H7 L3.5 2.5 Z" fill="#888"/></svg>
<div class="t" style="left:1570px;top:502.94px;font-size:10px;color:#111;font-family:'Liberation Sans';">Legend</div>
<div style="left:331px;top:515px;width:295px;height:17px;background:#efefef;"></div>
<div style="left:631px;top:515px;width:845px;height:17px;background:#ffffff;"></div>
<div style="left:1481px;top:515px;width:86px;height:17px;background:#efefef;"></div>
<div style="left:1567px;top:515px;width:42px;height:17px;background:#f3f3f3;"></div>
<div style="left:331px;top:531px;width:1278px;height:1px;background:#d9d9d9;"></div>
<div class="t" style="left:-232.5px;width:600px;text-align:right;top:520.33px;font-size:10px;color:#111;font-family:'Liberation Sans';">1</div>
<svg style="left:375.5px;top:519.5px" width="6" height="8"><path d="M0.7 0.7 L4.8 4 L0.7 7.3 Z" fill="none" stroke="#555" stroke-width="1"/></svg>
<div class="t" style="left:385.6px;top:520.33px;font-size:10px;color:#111;font-family:'Liberation Sans';">Telegram.exe (1412)</div>
<div class="t" style="left:965px;width:600px;text-align:right;top:520.33px;font-size:10px;color:#8e2020;font-family:'Liberation Sans';letter-spacing:-0.45px;word-spacing:0.6px;">159 498 240</div>
<div style="left:1568px;top:519.2px;width:21px;height:9.5px;background:#e0b020;"></div>
<div style="left:331px;top:532px;width:295px;height:16px;background:#efefef;"></div>
<div style="left:631px;top:532px;width:845px;height:16px;background:#ffffff;"></div>
<div style="left:1481px;top:532px;width:86px;height:16px;background:#efefef;"></div>
<div style="left:1567px;top:532px;width:42px;height:16px;background:#f3f3f3;"></div>
<div style="left:331px;top:547px;width:1278px;height:1px;background:#d9d9d9;"></div>
<div class="t" style="left:-232.5px;width:600px;text-align:right;top:537.33px;font-size:10px;color:#111;font-family:'Liberation Sans';">2</div>
<svg style="left:375.5px;top:536.5px" width="6" height="8"><path d="M0.7 0.7 L4.8 4 L0.7 7.3 Z" fill="none" stroke="#555" stroke-width="1"/></svg>
<div class="t" style="left:385.6px;top:537.33px;font-size:10px;color:#111;font-family:'Liberation Sans';">PagedPoolWs</div>
<div class="t" style="left:965px;width:600px;text-align:right;top:537.33px;font-size:10px;color:#8e2020;font-family:'Liberation Sans';letter-spacing:-0.45px;word-spacing:0.6px;">146 341 888</div>
<div style="left:1568px;top:536.2px;width:21px;height:9.5px;background:#2424d8;"></div>
<div style="left:331px;top:548px;width:295px;height:17px;background:#0a77d5;"></div>
<div style="left:631px;top:548px;width:845px;height:17px;background:#0a77d5;"></div>
<div style="left:1481px;top:548px;width:128px;height:17px;background:#0a77d5;"></div>
<div class="t" style="left:-232.5px;width:600px;text-align:right;top:553.33px;font-size:10px;color:#fff;font-family:'Liberation Sans';">3</div>
<svg style="left:375.5px;top:552.5px" width="6" height="8"><path d="M0.7 0.7 L4.8 4 L0.7 7.3 Z" fill="none" stroke="#222" stroke-width="1"/></svg>
<div class="t" style="left:385.6px;top:553.33px;font-size:10px;color:#fff;font-family:'Liberation Sans';">SearchApp.exe &lt;CortanaUI&gt; (3836)</div>
<div class="t" style="left:965px;width:600px;text-align:right;top:553.33px;font-size:10px;color:#fff;font-family:'Liberation Sans';letter-spacing:-0.45px;word-spacing:0.6px;">113 303 552</div>
<div style="left:1568px;top:552.2px;width:21px;height:9.5px;background:#6ac020;"></div>
<div style="left:331px;top:548px;width:295px;height:17px;box-sizing:border-box;border:1px dashed #0d2a55;border-right:none;"></div>
<div style="left:631px;top:548px;width:845px;height:17px;box-sizing:border-box;border:1px dashed #0d2a55;border-left:none;border-right:none;"></div>
<div style="left:1481px;top:548px;width:128px;height:17px;box-sizing:border-box;border:1px dashed #0d2a55;border-left:none;"></div>
<div style="left:331px;top:565px;width:295px;height:16px;background:#efefef;"></div>
<div style="left:631px;top:565px;width:845px;height:16px;background:#ffffff;"></div>
<div style="left:1481px;top:565px;width:86px;height:16px;background:#efefef;"></div>
<div style="left:1567px;top:565px;width:42px;height:16px;background:#f3f3f3;"></div>
<div style="left:331px;top:580px;width:1278px;height:1px;background:#d9d9d9;"></div>
<div class="t" style="left:-232.5px;width:600px;text-align:right;top:570.33px;font-size:10px;color:#111;font-family:'Liberation Sans';">4</div>
<svg style="left:375.5px;top:569.5px" width="6" height="8"><path d="M0.7 0.7 L4.8 4 L0.7 7.3 Z" fill="none" stroke="#555" stroke-width="1"/></svg>
<div class="t" style="left:385.6px;top:570.33px;font-size:10px;color:#111;font-family:'Liberation Sans';">explorer.exe (6452)</div>
<div class="t" style="left:965px;width:600px;text-align:right;top:570.33px;font-size:10px;color:#8e2020;font-family:'Liberation Sans';letter-spacing:-0.45px;word-spacing:0.6px;">112 234 496</div>
<div style="left:1568px;top:569.2px;width:21px;height:9.5px;background:#d01c3c;"></div>
<div style="left:331px;top:581px;width:295px;height:17px;background:#efefef;"></div>
<div style="left:631px;top:581px;width:845px;height:17px;background:#ffffff;"></div>
<div style="left:1481px;top:581px;width:86px;height:17px;background:#efefef;"></div>
<div style="left:1567px;top:581px;width:42px;height:17px;background:#f3f3f3;"></div>
<div style="left:331px;top:597px;width:1278px;height:1px;background:#d9d9d9;"></div>
<div class="t" style="left:-232.5px;width:600px;text-align:right;top:586.33px;font-size:10px;color:#111;font-family:'Liberation Sans';">5</div>
<svg style="left:375.5px;top:585.5px" width="6" height="8"><path d="M0.7 0.7 L4.8 4 L0.7 7.3 Z" fill="none" stroke="#555" stroke-width="1"/></svg>
<div class="t" style="left:385.6px;top:586.33px;font-size:10px;color:#111;font-family:'Liberation Sans';">Registry (148)</div>
<div class="t" style="left:965px;width:600px;text-align:right;top:586.33px;font-size:10px;color:#8e2020;font-family:'Liberation Sans';letter-spacing:-0.45px;word-spacing:0.6px;">98 902 016</div>
<div style="left:1568px;top:585.2px;width:21px;height:9.5px;background:#20a818;"></div>
<div style="left:331px;top:598px;width:295px;height:16px;background:#efefef;"></div>
<div style="left:631px;top:598px;width:845px;height:16px;background:#ffffff;"></div>
<div style="left:1481px;top:598px;width:86px;height:16px;background:#efefef;"></div>
<div style="left:1567px;top:598px;width:42px;height:16px;background:#f3f3f3;"></div>
<div style="left:331px;top:613px;width:1278px;height:1px;background:#d9d9d9;"></div>
<div class="t" style="left:-232.5px;width:600px;text-align:right;top:603.33px;font-size:10px;color:#111;font-family:'Liberation Sans';">6</div>
<svg style="left:375.5px;top:602.5px" width="6" height="8"><path d="M0.7 0.7 L4.8 4 L0.7 7.3 Z" fill="none" stroke="#555" stroke-width="1"/></svg>
<div class="t" style="left:385.6px;top:603.33px;font-size:10px;color:#111;font-family:'Liberation Sans';">ekrn.exe (1840)</div>
<div class="t" style="left:965px;width:600px;text-align:right;top:603.33px;font-size:10px;color:#8e2020;font-family:'Liberation Sans';letter-spacing:-0.45px;word-spacing:0.6px;">98 406 400</div>
<div style="left:1568px;top:602.2px;width:21px;height:9.5px;background:#20d070;"></div>
<div style="left:331px;top:614px;width:295px;height:17px;background:#efefef;"></div>
<div style="left:631px;top:614px;width:845px;height:17px;background:#ffffff;"></div>
<div style="left:1481px;top:614px;width:86px;height:17px;background:#efefef;"></div>
<div style="left:1567px;top:614px;width:42px;height:17px;background:#f3f3f3;"></div>
<div style="left:331px;top:630px;width:1278px;height:1px;background:#d9d9d9;"></div>
<div class="t" style="left:-232.5px;width:600px;text-align:right;top:619.33px;font-size:10px;color:#111;font-family:'Liberation Sans';">7</div>
<svg style="left:375.5px;top:618.5px" width="6" height="8"><path d="M0.7 0.7 L4.8 4 L0.7 7.3 Z" fill="none" stroke="#555" stroke-width="1"/></svg>
<div class="t" style="left:385.6px;top:619.33px;font-size:10px;color:#111;font-family:'Liberation Sans';letter-spacing:0.1px;">StartMenuExperienceHost.exe &lt;Microsoft.Window...</div>
<div class="t" style="left:965px;width:600px;text-align:right;top:619.33px;font-size:10px;color:#8e2020;font-family:'Liberation Sans';letter-spacing:-0.45px;word-spacing:0.6px;">83 521 536</div>
<div style="left:1568px;top:618.2px;width:21px;height:9.5px;background:#d01818;"></div>
<div style="left:331px;top:631px;width:295px;height:16px;background:#efefef;"></div>
<div style="left:631px;top:631px;width:845px;height:16px;background:#ffffff;"></div>
<div style="left:1481px;top:631px;width:86px;height:16px;background:#efefef;"></div>
<div style="left:1567px;top:631px;width:42px;height:16px;background:#f3f3f3;"></div>
<div style="left:331px;top:646px;width:1278px;height:1px;background:#d9d9d9;"></div>
<div class="t" style="left:-232.5px;width:600px;text-align:right;top:636.33px;font-size:10px;color:#111;font-family:'Liberation Sans';">8</div>
<div class="t" style="left:385.6px;top:636.33px;font-size:10px;color:#111;font-family:'Liberation Sans';">LogonUI.exe (1412)</div>
<div class="t" style="left:632px;top:636.33px;font-size:10px;color:#111;font-family:'Liberation Sans';letter-spacing:-0.42px;">29,068415700</div>
<div class="t" style="left:965px;width:600px;text-align:right;top:636.33px;font-size:10px;color:#8e2020;font-family:'Liberation Sans';letter-spacing:-0.45px;word-spacing:0.6px;">79 163 392</div>
<div style="left:1568px;top:635.2px;width:21px;height:9.5px;background:#4a1ad8;"></div>
<div style="left:331px;top:647px;width:295px;height:17px;background:#efefef;"></div>
<div style="left:631px;top:647px;width:845px;height:17px;background:#ffffff;"></div>
<div style="left:1481px;top:647px;width:86px;height:17px;background:#efefef;"></div>
<div style="left:1567px;top:647px;width:42px;height:17px;background:#f3f3f3;"></div>
<div style="left:331px;top:663px;width:1278px;height:1px;background:#d9d9d9;"></div>
<div class="t" style="left:-232.5px;width:600px;text-align:right;top:652.33px;font-size:10px;color:#111;font-family:'Liberation Sans';">9</div>
<svg style="left:375.5px;top:651.5px" width="6" height="8"><path d="M0.7 0.7 L4.8 4 L0.7 7.3 Z" fill="none" stroke="#555" stroke-width="1"/></svg>
<div class="t" style="left:385.6px;top:652.33px;font-size:10px;color:#111;font-family:'Liberation Sans';">Eye Saver.exe (3772)</div>
<div class="t" style="left:965px;width:600px;text-align:right;top:652.33px;font-size:10px;color:#8e2020;font-family:'Liberation Sans';letter-spacing:-0.45px;word-spacing:0.6px;">77 967 360</div>
<div style="left:1568px;top:651.2px;width:21px;height:9.5px;background:#c0186c;"></div>
<div style="left:331px;top:664px;width:295px;height:5px;background:#efefef;"></div>
<div style="left:631px;top:664px;width:845px;height:5px;background:#ffffff;"></div>
<div style="left:1481px;top:664px;width:86px;height:5px;background:#efefef;"></div>
<div style="left:1567px;top:664px;width:42px;height:5px;background:#f3f3f3;"></div>
<div class="t" style="left:-232.5px;width:600px;text-align:right;top:669.33px;font-size:10px;color:#111;font-family:'Liberation Sans';">10</div>
<svg style="left:375.5px;top:668.5px" width="6" height="8"><path d="M0.7 0.7 L4.8 4 L0.7 7.3 Z" fill="none" stroke="#555" stroke-width="1"/></svg>
<div class="t" style="left:385.6px;top:669.33px;font-size:10px;color:#111;font-family:'Liberation Sans';">SearchApp.exe (4424)</div>
<div class="t" style="left:965px;width:600px;text-align:right;top:669.33px;font-size:10px;color:#8e2020;font-family:'Liberation Sans';letter-spacing:-0.45px;word-spacing:0.6px;">75 075 008</div>
<div style="left:1568px;top:668.2px;width:21px;height:9.5px;background:#20a850;"></div>
<div style="left:370px;top:497px;width:1px;height:172px;background:#dcdcdc;"></div>
<div style="left:716px;top:497px;width:1px;height:172px;background:#dcdcdc;"></div>
<div style="left:1567px;top:497px;width:1px;height:172px;background:#dcdcdc;"></div>
<div style="left:626px;top:497px;width:5px;height:172px;background:#f8d000;"></div>
<div style="left:1477px;top:497px;width:4px;height:172px;background:#acd5ee;"></div>
<div style="left:1609px;top:497px;width:15px;height:172px;background:#f0f0f0;"></div>
<div style="left:1610px;top:530.5px;width:13px;height:9px;background:#d3d3d3;"></div>
<svg style="left:1612px;top:520px" width="9" height="5"><path d="M0.5 4.5 L4.5 0.5 L8.5 4.5" fill="none" stroke="#a0a0a0" stroke-width="1"/></svg>
<svg style="left:1612px;top:659px" width="9" height="5"><path d="M0.5 0.5 L4.5 4.5 L8.5 0.5" fill="none" stroke="#a0a0a0" stroke-width="1"/></svg>
<div style="left:329px;top:331px;width:2px;height:340px;background:#5f6368;"></div>
<div style="left:1624px;top:331px;width:2.5px;height:340px;background:#6a6a6a;"></div>
<div style="left:329px;top:669px;width:1297px;height:2px;background:#5f6368;"></div>
<div style="left:328.5px;top:671px;width:1298.5px;height:141px;background:#c0c0c0;"></div>
<div style="left:331px;top:812px;width:1296px;height:38px;background:#ffffff;"></div>
<div class="t" style="left:-102px;width:600px;text-align:right;top:814.17px;font-size:9.6px;color:#111;font-family:'Liberation Sans';">Start:</div>
<div class="t" style="left:-102px;width:600px;text-align:right;top:826.87px;font-size:9.6px;color:#111;font-family:'Liberation Sans';">End:</div>
<div class="t" style="left:-102px;width:600px;text-align:right;top:839.47px;font-size:9.6px;color:#111;font-family:'Liberation Sans';">Duration:</div>
<div class="t" style="left:502px;top:815.02px;font-size:8.6px;color:#111;font-family:'Liberation Mono';">29.077184405s</div>
<div class="t" style="left:502px;top:827.72px;font-size:8.6px;color:#111;font-family:'Liberation Mono';">63.206219021s</div>
<div class="t" style="left:502px;top:840.32px;font-size:8.6px;color:#111;font-family:'Liberation Mono';">34.129034616s</div>
<div style="left:576px;top:812.5px;width:1033px;height:21.0px;background:#0b78d8;"></div>
<svg style="left:576px;top:812.5px" width="1033" height="21.0"><path d="M3.5 0 V4.5 M9.5 0 V4.5 M15.5 0 V4.5 M21.5 0 V4.5 M33.5 0 V4.5 M39.5 0 V4.5 M45.5 0 V4.5 M51.5 0 V4.5 M57.5 0 V4.5 M63.5 0 V4.5 M69.5 0 V4.5 M75.5 0 V4.5 M81.5 0 V4.5 M94.5 0 V4.5 M100.5 0 V4.5 M106.5 0 V4.5 M112.5 0 V4.5 M118.5 0 V4.5 M124.5 0 V4.5 M130.5 0 V4.5 M136.5 0 V4.5 M142.5 0 V4.5 M154.5 0 V4.5 M160.5 0 V4.5 M166.5 0 V4.5 M172.5 0 V4.5 M178.5 0 V4.5 M184.5 0 V4.5 M190.5 0 V4.5 M197.5 0 V4.5 M203.5 0 V4.5 M215.5 0 V4.5 M221.5 0 V4.5 M227.5 0 V4.5 M233.5 0 V4.5 M239.5 0 V4.5 M245.5 0 V4.5 M251.5 0 V4.5 M257.5 0 V4.5 M263.5 0 V4.5 M275.5 0 V4.5 M281.5 0 V4.5 M287.5 0 V4.5 M293.5 0 V4.5 M299.5 0 V4.5 M306.5 0 V4.5 M312.5 0 V4.5 M318.5 0 V4.5 M324.5 0 V4.5 M336.5 0 V4.5 M342.5 0 V4.5 M348.5 0 V4.5 M354.5 0 V4.5 M360.5 0 V4.5 M366.5 0 V4.5 M372.5 0 V4.5 M378.5 0 V4.5 M384.5 0 V4.5 M396.5 0 V4.5 M402.5 0 V4.5 M408.5 0 V4.5 M415.5 0 V4.5 M421.5 0 V4.5 M427.5 0 V4.5 M433.5 0 V4.5 M439.5 0 V4.5 M445.5 0 V4.5 M457.5 0 V4.5 M463.5 0 V4.5 M469.5 0 V4.5 M475.5 0 V4.5 M481.5 0 V4.5 M487.5 0 V4.5 M493.5 0 V4.5 M499.5 0 V4.5 M505.5 0 V4.5 M517.5 0 V4.5 M524.5 0 V4.5 M530.5 0 V4.5 M536.5 0 V4.5 M542.5 0 V4.5 M548.5 0 V4.5 M554.5 0 V4.5 M560.5 0 V4.5 M566.5 0 V4.5 M578.5 0 V4.5 M584.5 0 V4.5 M590.5 0 V4.5 M596.5 0 V4.5 M602.5 0 V4.5 M608.5 0 V4.5 M614.5 0 V4.5 M620.5 0 V4.5 M626.5 0 V4.5 M639.5 0 V4.5 M645.5 0 V4.5 M651.5 0 V4.5 M657.5 0 V4.5 M663.5 0 V4.5 M669.5 0 V4.5 M675.5 0 V4.5 M681.5 0 V4.5 M687.5 0 V4.5 M699.5 0 V4.5 M705.5 0 V4.5 M711.5 0 V4.5 M717.5 0 V4.5 M723.5 0 V4.5 M729.5 0 V4.5 M736.5 0 V4.5 M742.5 0 V4.5 M748.5 0 V4.5 M760.5 0 V4.5 M766.5 0 V4.5 M772.5 0 V4.5 M778.5 0 V4.5 M784.5 0 V4.5 M790.5 0 V4.5 M796.5 0 V4.5 M802.5 0 V4.5 M808.5 0 V4.5 M820.5 0 V4.5 M826.5 0 V4.5 M832.5 0 V4.5 M838.5 0 V4.5 M845.5 0 V4.5 M851.5 0 V4.5 M857.5 0 V4.5 M863.5 0 V4.5 M869.5 0 V4.5 M881.5 0 V4.5 M887.5 0 V4.5 M893.5 0 V4.5 M899.5 0 V4.5 M905.5 0 V4.5 M911.5 0 V4.5 M917.5 0 V4.5 M923.5 0 V4.5 M929.5 0 V4.5 M941.5 0 V4.5 M947.5 0 V4.5 M954.5 0 V4.5 M960.5 0 V4.5 M966.5 0 V4.5 M972.5 0 V4.5 M978.5 0 V4.5 M984.5 0 V4.5 M990.5 0 V4.5 M1002.5 0 V4.5 M1008.5 0 V4.5 M1014.5 0 V4.5 M1020.5 0 V4.5 M1026.5 0 V4.5" stroke="#5aa2e6" stroke-width="1"/><path d="M27.5 0 V10 M88.5 0 V10 M148.5 0 V10 M209.5 0 V10 M269.5 0 V10 M330.5 0 V10 M390.5 0 V10 M451.5 0 V10 M511.5 0 V10 M572.5 0 V10 M633.5 0 V10 M693.5 0 V10 M754.5 0 V10 M814.5 0 V10 M875.5 0 V10 M935.5 0 V10 M996.5 0 V10" stroke="#ffffff" stroke-width="1"/></svg>
<div class="t" style="left:588.8px;width:30px;text-align:center;top:826.03px;font-size:8px;color:#f4f9ff;font-family:'Liberation Sans';-webkit-text-stroke:0.1px currentColor;">30</div>
<div class="t" style="left:649.3599999999999px;width:30px;text-align:center;top:826.03px;font-size:8px;color:#f4f9ff;font-family:'Liberation Sans';-webkit-text-stroke:0.1px currentColor;">32</div>
<div class="t" style="left:709.92px;width:30px;text-align:center;top:826.03px;font-size:8px;color:#f4f9ff;font-family:'Liberation Sans';-webkit-text-stroke:0.1px currentColor;">34</div>
<div class="t" style="left:770.48px;width:30px;text-align:center;top:826.03px;font-size:8px;color:#f4f9ff;font-family:'Liberation Sans';-webkit-text-stroke:0.1px currentColor;">36</div>
<div class="t" style="left:831.04px;width:30px;text-align:center;top:826.03px;font-size:8px;color:#f4f9ff;font-family:'Liberation Sans';-webkit-text-stroke:0.1px currentColor;">38</div>
<div class="t" style="left:891.5999999999999px;width:30px;text-align:center;top:826.03px;font-size:8px;color:#f4f9ff;font-family:'Liberation Sans';-webkit-text-stroke:0.1px currentColor;">40</div>
<div class="t" style="left:952.16px;width:30px;text-align:center;top:826.03px;font-size:8px;color:#f4f9ff;font-family:'Liberation Sans';-webkit-text-stroke:0.1px currentColor;">42</div>
<div class="t" style="left:1012.72px;width:30px;text-align:center;top:826.03px;font-size:8px;color:#f4f9ff;font-family:'Liberation Sans';-webkit-text-stroke:0.1px currentColor;">44</div>
<div class="t" style="left:1073.28px;width:30px;text-align:center;top:826.03px;font-size:8px;color:#f4f9ff;font-family:'Liberation Sans';-webkit-text-stroke:0.1px currentColor;">46</div>
<div class="t" style="left:1133.84px;width:30px;text-align:center;top:826.03px;font-size:8px;color:#f4f9ff;font-family:'Liberation Sans';-webkit-text-stroke:0.1px currentColor;">48</div>
<div class="t" style="left:1194.4px;width:30px;text-align:center;top:826.03px;font-size:8px;color:#f4f9ff;font-family:'Liberation Sans';-webkit-text-stroke:0.1px currentColor;">50</div>
<div class="t" style="left:1254.96px;width:30px;text-align:center;top:826.03px;font-size:8px;color:#f4f9ff;font-family:'Liberation Sans';-webkit-text-stroke:0.1px currentColor;">52</div>
<div class="t" style="left:1315.52px;width:30px;text-align:center;top:826.03px;font-size:8px;color:#f4f9ff;font-family:'Liberation Sans';-webkit-text-stroke:0.1px currentColor;">54</div>
<div class="t" style="left:1376.08px;width:30px;text-align:center;top:826.03px;font-size:8px;color:#f4f9ff;font-family:'Liberation Sans';-webkit-text-stroke:0.1px currentColor;">56</div>
<div class="t" style="left:1436.6399999999999px;width:30px;text-align:center;top:826.03px;font-size:8px;color:#f4f9ff;font-family:'Liberation Sans';-webkit-text-stroke:0.1px currentColor;">58</div>
<div class="t" style="left:1497.2px;width:30px;text-align:center;top:826.03px;font-size:8px;color:#f4f9ff;font-family:'Liberation Sans';-webkit-text-stroke:0.1px currentColor;">60</div>
<div class="t" style="left:1557.76px;width:30px;text-align:center;top:826.03px;font-size:8px;color:#f4f9ff;font-family:'Liberation Sans';-webkit-text-stroke:0.1px currentColor;">62</div>
<div style="left:576px;top:833.5px;width:1033px;height:16px;background:#efefef;"></div>
<div style="left:775px;top:835.5px;width:216px;height:14px;background:#cdcdcd;"></div>
<svg style="left:580px;top:837px" width="5" height="8"><path d="M4.5 0.5 L0.8 4 L4.5 7.5" fill="none" stroke="#777" stroke-width="1"/></svg>
<svg style="left:1600px;top:837px" width="5" height="8"><path d="M0.5 0.5 L4.2 4 L0.5 7.5" fill="none" stroke="#555" stroke-width="1"/></svg>
<div style="left:18px;top:829px;width:286px;height:21px;background:#0b78d8;"></div>
<svg style="left:18px;top:829px" width="286" height="21"><path d="M14.5 0 V5 M23.5 0 V5 M31.5 0 V5 M40.5 0 V5 M56.5 0 V5 M65.5 0 V5 M73.5 0 V5 M82.5 0 V5 M99.5 0 V5 M107.5 0 V5 M115.5 0 V5 M124.5 0 V5 M141.5 0 V5 M149.5 0 V5 M158.5 0 V5 M166.5 0 V5 M183.5 0 V5 M191.5 0 V5 M200.5 0 V5 M208.5 0 V5 M225.5 0 V5 M233.5 0 V5 M242.5 0 V5 M250.5 0 V5 M267.5 0 V5 M275.5 0 V5 M284.5 0 V5" stroke="#5aa2e6" stroke-width="1"/><path d="M6.5 0 V9.5 M48.5 0 V9.5 M90.5 0 V9.5 M132.5 0 V9.5 M174.5 0 V9.5 M216.5 0 V9.5 M259.5 0 V9.5" stroke="#ffffff" stroke-width="1"/></svg>
<div class="t" style="left:9.8px;width:30px;text-align:center;top:842.36px;font-size:8.2px;color:#f4f9ff;font-family:'Liberation Sans';-webkit-text-stroke:0.1px currentColor;">30</div>
<div class="t" style="left:51.900000000000006px;width:30px;text-align:center;top:842.36px;font-size:8.2px;color:#f4f9ff;font-family:'Liberation Sans';-webkit-text-stroke:0.1px currentColor;">35</div>
<div class="t" style="left:94.0px;width:30px;text-align:center;top:842.36px;font-size:8.2px;color:#f4f9ff;font-family:'Liberation Sans';-webkit-text-stroke:0.1px currentColor;">40</div>
<div class="t" style="left:136.1px;width:30px;text-align:center;top:842.36px;font-size:8.2px;color:#f4f9ff;font-family:'Liberation Sans';-webkit-text-stroke:0.1px currentColor;">45</div>
<div class="t" style="left:178.20000000000002px;width:30px;text-align:center;top:842.36px;font-size:8.2px;color:#f4f9ff;font-family:'Liberation Sans';-webkit-text-stroke:0.1px currentColor;">50</div>
<div class="t" style="left:220.3px;width:30px;text-align:center;top:842.36px;font-size:8.2px;color:#f4f9ff;font-family:'Liberation Sans';-webkit-text-stroke:0.1px currentColor;">55</div>
<div class="t" style="left:262.4px;width:30px;text-align:center;top:842.36px;font-size:8.2px;color:#f4f9ff;font-family:'Liberation Sans';-webkit-text-stroke:0.1px currentColor;">60</div>
<div style="left:17px;top:71px;width:287px;height:48px;overflow:hidden;"><svg width="287" height="48" style="position:absolute;left:0;top:0;overflow:hidden"><g transform="translate(-17,-71)"><circle cx="19" cy="73.8" r="2" fill="#70b040"/><circle cx="21" cy="73.8" r="2" fill="#50a060"/><circle cx="23" cy="73.8" r="2" fill="#409060"/><circle cx="34" cy="73.8" r="2" fill="#3a9a50"/><circle cx="37" cy="73.8" r="2" fill="#3a9a50"/><circle cx="43" cy="73.8" r="2" fill="#3a9a50"/><circle cx="48" cy="73.8" r="2" fill="#70b040"/><circle cx="51" cy="73.8" r="2" fill="#3a9a50"/><circle cx="58" cy="73.8" r="2" fill="#50a060"/><circle cx="69" cy="73.8" r="2" fill="#3a9a50"/><circle cx="76" cy="73.8" r="2" fill="#3a9a50"/><circle cx="92" cy="73.8" r="2" fill="#409060"/><circle cx="99" cy="73.8" r="2" fill="#409060"/><circle cx="101" cy="73.8" r="2" fill="#3a9a50"/><circle cx="104" cy="73.8" r="2" fill="#50a060"/><circle cx="117" cy="73.8" r="2" fill="#3a9a50"/><circle cx="126" cy="73.8" r="2" fill="#409060"/><circle cx="145" cy="73.8" r="2" fill="#3a9a50"/><circle cx="152" cy="73.8" r="2" fill="#3a9a50"/><circle cx="167" cy="73.8" r="2" fill="#50a060"/><circle cx="173" cy="73.8" r="2" fill="#3a9a50"/><circle cx="182" cy="73.8" r="2" fill="#409060"/><circle cx="190" cy="73.8" r="2" fill="#3a9a50"/><circle cx="196" cy="73.8" r="2" fill="#50a060"/><circle cx="200" cy="73.8" r="2" fill="#3a9a50"/><circle cx="211" cy="73.8" r="2" fill="#50a060"/><circle cx="231" cy="73.8" r="2" fill="#70b040"/><circle cx="241" cy="73.8" r="2" fill="#409060"/><circle cx="243" cy="73.8" r="2" fill="#50a060"/><circle cx="269" cy="73.8" r="2" fill="#3a9a50"/><circle cx="303" cy="73.8" r="2" fill="#70b040"/><path d="M19.0 75.3 L21.2 77.8 L19.0 80.3 L16.8 77.8 Z" fill="#c030a0"/><path d="M21.7 75.3 L23.9 77.8 L21.7 80.3 L19.4 77.8 Z" fill="#6a10b0"/><path d="M24.4 75.3 L26.6 77.8 L24.4 80.3 L22.1 77.8 Z" fill="#107050"/><path d="M27.1 75.3 L29.3 77.8 L27.1 80.3 L24.8 77.8 Z" fill="#208080"/><path d="M29.8 75.3 L32.0 77.8 L29.8 80.3 L27.5 77.8 Z" fill="#6a10b0"/><path d="M32.5 75.3 L34.8 77.8 L32.5 80.3 L30.2 77.8 Z" fill="#107050"/><path d="M35.2 75.3 L37.5 77.8 L35.2 80.3 L33.0 77.8 Z" fill="#208080"/><path d="M37.9 75.3 L40.2 77.8 L37.9 80.3 L35.7 77.8 Z" fill="#b0b030"/><path d="M40.6 75.3 L42.9 77.8 L40.6 80.3 L38.4 77.8 Z" fill="#3030c0"/><path d="M43.3 75.3 L45.6 77.8 L43.3 80.3 L41.1 77.8 Z" fill="#107050"/><path d="M46.0 75.3 L48.3 77.8 L46.0 80.3 L43.8 77.8 Z" fill="#7a1ab8"/><path d="M48.7 75.3 L51.0 77.8 L48.7 80.3 L46.5 77.8 Z" fill="#a010b0"/><path d="M51.4 75.3 L53.7 77.8 L51.4 80.3 L49.2 77.8 Z" fill="#208080"/><path d="M54.1 75.3 L56.4 77.8 L54.1 80.3 L51.9 77.8 Z" fill="#b0b030"/><path d="M56.8 75.3 L59.1 77.8 L56.8 80.3 L54.6 77.8 Z" fill="#8020c0"/><path d="M59.5 75.3 L61.8 77.8 L59.5 80.3 L57.3 77.8 Z" fill="#a010b0"/><path d="M62.2 75.3 L64.5 77.8 L62.2 80.3 L60.0 77.8 Z" fill="#5a10a0"/><path d="M64.9 75.3 L67.2 77.8 L64.9 80.3 L62.7 77.8 Z" fill="#b0b030"/><path d="M67.6 75.3 L69.9 77.8 L67.6 80.3 L65.4 77.8 Z" fill="#3030c0"/><path d="M70.3 75.3 L72.6 77.8 L70.3 80.3 L68.1 77.8 Z" fill="#c030a0"/><path d="M73.0 75.3 L75.3 77.8 L73.0 80.3 L70.8 77.8 Z" fill="#208080"/><path d="M75.7 75.3 L78.0 77.8 L75.7 80.3 L73.5 77.8 Z" fill="#b0b030"/><path d="M78.0 75.3 L80.2 77.8 L78.0 80.3 L75.8 77.8 Z" fill="#3050c0"/><path d="M80.7 75.3 L83.0 77.8 L80.7 80.3 L78.5 77.8 Z" fill="#7020a0"/><path d="M83.4 75.3 L85.7 77.8 L83.4 80.3 L81.2 77.8 Z" fill="#2a2a80"/><path d="M88.8 75.3 L91.1 77.8 L88.8 80.3 L86.6 77.8 Z" fill="#2a2a80"/><path d="M92.0 75.3 L94.2 77.8 L92.0 80.3 L89.8 77.8 Z" fill="#d03050"/><path d="M94.7 75.3 L97.0 77.8 L94.7 80.3 L92.5 77.8 Z" fill="#c02070"/><path d="M97.4 75.3 L99.7 77.8 L97.4 80.3 L95.2 77.8 Z" fill="#a03070"/><path d="M100.1 75.3 L102.4 77.8 L100.1 80.3 L97.9 77.8 Z" fill="#e060a0"/><path d="M102.8 75.3 L105.1 77.8 L102.8 80.3 L100.6 77.8 Z" fill="#c040b0"/><path d="M105.5 75.3 L107.8 77.8 L105.5 80.3 L103.3 77.8 Z" fill="#a03070"/><path d="M108.2 75.3 L110.5 77.8 L108.2 80.3 L106.0 77.8 Z" fill="#c02070"/><path d="M110.9 75.3 L113.2 77.8 L110.9 80.3 L108.7 77.8 Z" fill="#d050a0"/><path d="M113.6 75.3 L115.9 77.8 L113.6 80.3 L111.4 77.8 Z" fill="#c06050"/><path d="M116.3 75.3 L118.6 77.8 L116.3 80.3 L114.1 77.8 Z" fill="#9020c0"/><path d="M119.0 75.3 L121.3 77.8 L119.0 80.3 L116.8 77.8 Z" fill="#a03070"/><path d="M121.7 75.3 L124.0 77.8 L121.7 80.3 L119.5 77.8 Z" fill="#a03070"/><path d="M124.4 75.3 L126.7 77.8 L124.4 80.3 L122.2 77.8 Z" fill="#c06050"/><path d="M127.1 75.3 L129.4 77.8 L127.1 80.3 L124.9 77.8 Z" fill="#e060a0"/><path d="M129.8 75.3 L132.1 77.8 L129.8 80.3 L127.6 77.8 Z" fill="#c06050"/><path d="M132.5 75.3 L134.8 77.8 L132.5 80.3 L130.3 77.8 Z" fill="#c040b0"/><path d="M135.2 75.3 L137.5 77.8 L135.2 80.3 L133.0 77.8 Z" fill="#e060a0"/><path d="M137.9 75.3 L140.2 77.8 L137.9 80.3 L135.7 77.8 Z" fill="#c04080"/><path d="M140.6 75.3 L142.8 77.8 L140.6 80.3 L138.3 77.8 Z" fill="#c04080"/><path d="M143.3 75.3 L145.5 77.8 L143.3 80.3 L141.0 77.8 Z" fill="#9020c0"/><path d="M146.0 75.3 L148.2 77.8 L146.0 80.3 L143.7 77.8 Z" fill="#c02070"/><path d="M148.7 75.3 L150.9 77.8 L148.7 80.3 L146.4 77.8 Z" fill="#c06050"/><path d="M151.4 75.3 L153.6 77.8 L151.4 80.3 L149.1 77.8 Z" fill="#e060a0"/><path d="M154.1 75.3 L156.3 77.8 L154.1 80.3 L151.8 77.8 Z" fill="#c02070"/><path d="M156.8 75.3 L159.0 77.8 L156.8 80.3 L154.5 77.8 Z" fill="#c04080"/><path d="M159.5 75.3 L161.7 77.8 L159.5 80.3 L157.2 77.8 Z" fill="#a020a0"/><path d="M162.2 75.3 L164.4 77.8 L162.2 80.3 L159.9 77.8 Z" fill="#902090"/><path d="M164.9 75.3 L167.1 77.8 L164.9 80.3 L162.6 77.8 Z" fill="#d050a0"/><path d="M167.6 75.3 L169.8 77.8 L167.6 80.3 L165.3 77.8 Z" fill="#30a060"/><path d="M170.3 75.3 L172.5 77.8 L170.3 80.3 L168.0 77.8 Z" fill="#902090"/><path d="M173.0 75.3 L175.2 77.8 L173.0 80.3 L170.7 77.8 Z" fill="#e060a0"/><path d="M175.7 75.3 L177.9 77.8 L175.7 80.3 L173.4 77.8 Z" fill="#e060a0"/><path d="M178.4 75.3 L180.6 77.8 L178.4 80.3 L176.1 77.8 Z" fill="#902090"/><path d="M181.1 75.3 L183.3 77.8 L181.1 80.3 L178.8 77.8 Z" fill="#9020c0"/><path d="M183.8 75.3 L186.0 77.8 L183.8 80.3 L181.5 77.8 Z" fill="#9020c0"/><path d="M190.7 75.3 L192.9 77.8 L190.7 80.3 L188.4 77.8 Z" fill="#3a3aa0"/><path d="M193.4 75.3 L195.6 77.8 L193.4 80.3 L191.1 77.8 Z" fill="#c020c0"/><path d="M206.9 75.3 L209.1 77.8 L206.9 80.3 L204.6 77.8 Z" fill="#3050c0"/><path d="M212.3 75.3 L214.5 77.8 L212.3 80.3 L210.0 77.8 Z" fill="#d0a040"/><path d="M223.1 75.3 L225.3 77.8 L223.1 80.3 L220.8 77.8 Z" fill="#6a1a9a"/><path d="M233.9 75.3 L236.1 77.8 L233.9 80.3 L231.6 77.8 Z" fill="#8030d0"/><path d="M250.1 75.3 L252.3 77.8 L250.1 80.3 L247.8 77.8 Z" fill="#b01890"/><path d="M252.8 75.3 L255.0 77.8 L252.8 80.3 L250.5 77.8 Z" fill="#b01890"/><path d="M260.9 75.3 L263.1 77.8 L260.9 80.3 L258.6 77.8 Z" fill="#8030d0"/><path d="M266.3 75.3 L268.5 77.8 L266.3 80.3 L264.0 77.8 Z" fill="#4040b0"/><path d="M271.7 75.3 L273.9 77.8 L271.7 80.3 L269.4 77.8 Z" fill="#3050c0"/><path d="M279.8 75.3 L282.0 77.8 L279.8 80.3 L277.5 77.8 Z" fill="#3050c0"/><path d="M290.6 75.3 L292.8 77.8 L290.6 80.3 L288.3 77.8 Z" fill="#3050c0"/><path d="M298.7 75.3 L300.9 77.8 L298.7 80.3 L296.4 77.8 Z" fill="#b01890"/><path d="M19.0 79.6 L21.2 82.1 L19.0 84.6 L16.8 82.1 Z" fill="#7a10c0"/><path d="M21.7 79.6 L23.9 82.1 L21.7 84.6 L19.4 82.1 Z" fill="#3030c0"/><path d="M24.4 79.6 L26.6 82.1 L24.4 84.6 L22.1 82.1 Z" fill="#7a1ab8"/><path d="M27.1 79.6 L29.3 82.1 L27.1 84.6 L24.8 82.1 Z" fill="#b0b030"/><path d="M29.8 79.6 L32.0 82.1 L29.8 84.6 L27.5 82.1 Z" fill="#7a1ab8"/><path d="M32.5 79.6 L34.8 82.1 L32.5 84.6 L30.2 82.1 Z" fill="#b0b030"/><path d="M35.2 79.6 L37.5 82.1 L35.2 84.6 L33.0 82.1 Z" fill="#a010b0"/><path d="M37.9 79.6 L40.2 82.1 L37.9 84.6 L35.7 82.1 Z" fill="#107050"/><path d="M40.6 79.6 L42.9 82.1 L40.6 84.6 L38.4 82.1 Z" fill="#3030c0"/><path d="M43.3 79.6 L45.6 82.1 L43.3 84.6 L41.1 82.1 Z" fill="#6a10b0"/><path d="M46.0 79.6 L48.3 82.1 L46.0 84.6 L43.8 82.1 Z" fill="#3030c0"/><path d="M48.7 79.6 L51.0 82.1 L48.7 84.6 L46.5 82.1 Z" fill="#b0b030"/><path d="M51.4 79.6 L53.7 82.1 L51.4 84.6 L49.2 82.1 Z" fill="#a010b0"/><path d="M54.1 79.6 L56.4 82.1 L54.1 84.6 L51.9 82.1 Z" fill="#a010b0"/><path d="M56.8 79.6 L59.1 82.1 L56.8 84.6 L54.6 82.1 Z" fill="#9a10a8"/><path d="M59.5 79.6 L61.8 82.1 L59.5 84.6 L57.3 82.1 Z" fill="#107050"/><path d="M62.2 79.6 L64.5 82.1 L62.2 84.6 L60.0 82.1 Z" fill="#2040b0"/><path d="M64.9 79.6 L67.2 82.1 L64.9 84.6 L62.7 82.1 Z" fill="#c030a0"/><path d="M67.6 79.6 L69.9 82.1 L67.6 84.6 L65.4 82.1 Z" fill="#9a10a8"/><path d="M70.3 79.6 L72.6 82.1 L70.3 84.6 L68.1 82.1 Z" fill="#7a1ab8"/><path d="M73.0 79.6 L75.3 82.1 L73.0 84.6 L70.8 82.1 Z" fill="#5a10a0"/><path d="M75.7 79.6 L78.0 82.1 L75.7 84.6 L73.5 82.1 Z" fill="#a010b0"/><path d="M80.7 79.6 L83.0 82.1 L80.7 84.6 L78.5 82.1 Z" fill="#c020c0"/><path d="M83.4 79.6 L85.7 82.1 L83.4 84.6 L81.2 82.1 Z" fill="#7020a0"/><path d="M88.8 79.6 L91.1 82.1 L88.8 84.6 L86.6 82.1 Z" fill="#7020a0"/><path d="M92.0 79.6 L94.2 82.1 L92.0 84.6 L89.8 82.1 Z" fill="#c040b0"/><path d="M94.7 79.6 L97.0 82.1 L94.7 84.6 L92.5 82.1 Z" fill="#a020a0"/><path d="M97.4 79.6 L99.7 82.1 L97.4 84.6 L95.2 82.1 Z" fill="#d050a0"/><path d="M100.1 79.6 L102.4 82.1 L100.1 84.6 L97.9 82.1 Z" fill="#d03050"/><path d="M102.8 79.6 L105.1 82.1 L102.8 84.6 L100.6 82.1 Z" fill="#a020a0"/><path d="M105.5 79.6 L107.8 82.1 L105.5 84.6 L103.3 82.1 Z" fill="#c04080"/><path d="M108.2 79.6 L110.5 82.1 L108.2 84.6 L106.0 82.1 Z" fill="#9020c0"/><path d="M110.9 79.6 L113.2 82.1 L110.9 84.6 L108.7 82.1 Z" fill="#9020c0"/><path d="M113.6 79.6 L115.9 82.1 L113.6 84.6 L111.4 82.1 Z" fill="#9020c0"/><path d="M116.3 79.6 L118.6 82.1 L116.3 84.6 L114.1 82.1 Z" fill="#9020c0"/><path d="M119.0 79.6 L121.3 82.1 L119.0 84.6 L116.8 82.1 Z" fill="#c040b0"/><path d="M121.7 79.6 L124.0 82.1 L121.7 84.6 L119.5 82.1 Z" fill="#e060a0"/><path d="M124.4 79.6 L126.7 82.1 L124.4 84.6 L122.2 82.1 Z" fill="#d050a0"/><path d="M127.1 79.6 L129.4 82.1 L127.1 84.6 L124.9 82.1 Z" fill="#c040b0"/><path d="M129.8 79.6 L132.1 82.1 L129.8 84.6 L127.6 82.1 Z" fill="#902090"/><path d="M132.5 79.6 L134.8 82.1 L132.5 84.6 L130.3 82.1 Z" fill="#a020a0"/><path d="M135.2 79.6 L137.5 82.1 L135.2 84.6 L133.0 82.1 Z" fill="#a020a0"/><path d="M137.9 79.6 L140.2 82.1 L137.9 84.6 L135.7 82.1 Z" fill="#c04080"/><path d="M140.6 79.6 L142.8 82.1 L140.6 84.6 L138.3 82.1 Z" fill="#d050a0"/><path d="M143.3 79.6 L145.5 82.1 L143.3 84.6 L141.0 82.1 Z" fill="#30a060"/><path d="M146.0 79.6 L148.2 82.1 L146.0 84.6 L143.7 82.1 Z" fill="#d050a0"/><path d="M148.7 79.6 L150.9 82.1 L148.7 84.6 L146.4 82.1 Z" fill="#c04080"/><path d="M151.4 79.6 L153.6 82.1 L151.4 84.6 L149.1 82.1 Z" fill="#a03070"/><path d="M154.1 79.6 L156.3 82.1 L154.1 84.6 L151.8 82.1 Z" fill="#b020b0"/><path d="M156.8 79.6 L159.0 82.1 L156.8 84.6 L154.5 82.1 Z" fill="#c040b0"/><path d="M159.5 79.6 L161.7 82.1 L159.5 84.6 L157.2 82.1 Z" fill="#a020a0"/><path d="M162.2 79.6 L164.4 82.1 L162.2 84.6 L159.9 82.1 Z" fill="#30a060"/><path d="M164.9 79.6 L167.1 82.1 L164.9 84.6 L162.6 82.1 Z" fill="#a020a0"/><path d="M167.6 79.6 L169.8 82.1 L167.6 84.6 L165.3 82.1 Z" fill="#9020c0"/><path d="M170.3 79.6 L172.5 82.1 L170.3 84.6 L168.0 82.1 Z" fill="#30a060"/><path d="M173.0 79.6 L175.2 82.1 L173.0 84.6 L170.7 82.1 Z" fill="#a03070"/><path d="M175.7 79.6 L177.9 82.1 L175.7 84.6 L173.4 82.1 Z" fill="#30a060"/><path d="M178.4 79.6 L180.6 82.1 L178.4 84.6 L176.1 82.1 Z" fill="#b020b0"/><path d="M181.1 79.6 L183.3 82.1 L181.1 84.6 L178.8 82.1 Z" fill="#c02070"/><path d="M183.8 79.6 L186.0 82.1 L183.8 84.6 L181.5 82.1 Z" fill="#c02070"/><path d="M212.3 79.6 L214.5 82.1 L212.3 84.6 L210.0 82.1 Z" fill="#b01890"/><path d="M217.7 79.6 L219.9 82.1 L217.7 84.6 L215.4 82.1 Z" fill="#6a1a9a"/><path d="M220.4 79.6 L222.6 82.1 L220.4 84.6 L218.1 82.1 Z" fill="#8030d0"/><path d="M223.1 79.6 L225.3 82.1 L223.1 84.6 L220.8 82.1 Z" fill="#4040b0"/><path d="M225.8 79.6 L228.0 82.1 L225.8 84.6 L223.5 82.1 Z" fill="#3050c0"/><path d="M231.2 79.6 L233.4 82.1 L231.2 84.6 L228.9 82.1 Z" fill="#d0a040"/><path d="M239.3 79.6 L241.5 82.1 L239.3 84.6 L237.0 82.1 Z" fill="#4040b0"/><path d="M242.0 79.6 L244.2 82.1 L242.0 84.6 L239.7 82.1 Z" fill="#e050c0"/><path d="M247.4 79.6 L249.6 82.1 L247.4 84.6 L245.1 82.1 Z" fill="#8030d0"/><path d="M250.1 79.6 L252.3 82.1 L250.1 84.6 L247.8 82.1 Z" fill="#6a1a9a"/><path d="M252.8 79.6 L255.0 82.1 L252.8 84.6 L250.5 82.1 Z" fill="#3050c0"/><path d="M255.5 79.6 L257.7 82.1 L255.5 84.6 L253.2 82.1 Z" fill="#a030a0"/><path d="M260.9 79.6 L263.1 82.1 L260.9 84.6 L258.6 82.1 Z" fill="#a030a0"/><path d="M263.6 79.6 L265.8 82.1 L263.6 84.6 L261.3 82.1 Z" fill="#4040b0"/><path d="M266.3 79.6 L268.5 82.1 L266.3 84.6 L264.0 82.1 Z" fill="#4040b0"/><path d="M269.0 79.6 L271.2 82.1 L269.0 84.6 L266.7 82.1 Z" fill="#b01890"/><path d="M277.1 79.6 L279.3 82.1 L277.1 84.6 L274.8 82.1 Z" fill="#b01890"/><path d="M285.2 79.6 L287.4 82.1 L285.2 84.6 L282.9 82.1 Z" fill="#3050c0"/><path d="M290.6 79.6 L292.8 82.1 L290.6 84.6 L288.3 82.1 Z" fill="#d0a040"/><path d="M293.3 79.6 L295.5 82.1 L293.3 84.6 L291.0 82.1 Z" fill="#e050c0"/><path d="M296.0 79.6 L298.2 82.1 L296.0 84.6 L293.7 82.1 Z" fill="#e050c0"/><path d="M19.0 83.9 L21.2 86.4 L19.0 88.9 L16.8 86.4 Z" fill="#8020c0"/><path d="M21.7 83.9 L23.9 86.4 L21.7 88.9 L19.4 86.4 Z" fill="#208080"/><path d="M24.4 83.9 L26.6 86.4 L24.4 88.9 L22.1 86.4 Z" fill="#6a10b0"/><path d="M27.1 83.9 L29.3 86.4 L27.1 88.9 L24.8 86.4 Z" fill="#b0b030"/><path d="M29.8 83.9 L32.0 86.4 L29.8 88.9 L27.5 86.4 Z" fill="#7a10c0"/><path d="M32.5 83.9 L34.8 86.4 L32.5 88.9 L30.2 86.4 Z" fill="#2040b0"/><path d="M35.2 83.9 L37.5 86.4 L35.2 88.9 L33.0 86.4 Z" fill="#a010b0"/><path d="M37.9 83.9 L40.2 86.4 L37.9 88.9 L35.7 86.4 Z" fill="#7a10c0"/><path d="M40.6 83.9 L42.9 86.4 L40.6 88.9 L38.4 86.4 Z" fill="#9a10a8"/><path d="M43.3 83.9 L45.6 86.4 L43.3 88.9 L41.1 86.4 Z" fill="#6a10b0"/><path d="M46.0 83.9 L48.3 86.4 L46.0 88.9 L43.8 86.4 Z" fill="#a010b0"/><path d="M48.7 83.9 L51.0 86.4 L48.7 88.9 L46.5 86.4 Z" fill="#a010b0"/><path d="M51.4 83.9 L53.7 86.4 L51.4 88.9 L49.2 86.4 Z" fill="#b0b030"/><path d="M54.1 83.9 L56.4 86.4 L54.1 88.9 L51.9 86.4 Z" fill="#5a10a0"/><path d="M56.8 83.9 L59.1 86.4 L56.8 88.9 L54.6 86.4 Z" fill="#8020c0"/><path d="M59.5 83.9 L61.8 86.4 L59.5 88.9 L57.3 86.4 Z" fill="#7a10c0"/><path d="M62.2 83.9 L64.5 86.4 L62.2 88.9 L60.0 86.4 Z" fill="#107050"/><path d="M64.9 83.9 L67.2 86.4 L64.9 88.9 L62.7 86.4 Z" fill="#2040b0"/><path d="M67.6 83.9 L69.9 86.4 L67.6 88.9 L65.4 86.4 Z" fill="#2040b0"/><path d="M70.3 83.9 L72.6 86.4 L70.3 88.9 L68.1 86.4 Z" fill="#8020c0"/><path d="M73.0 83.9 L75.3 86.4 L73.0 88.9 L70.8 86.4 Z" fill="#208080"/><path d="M75.7 83.9 L78.0 86.4 L75.7 88.9 L73.5 86.4 Z" fill="#8020c0"/><path d="M78.0 83.9 L80.2 86.4 L78.0 88.9 L75.8 86.4 Z" fill="#c020c0"/><path d="M80.7 83.9 L83.0 86.4 L80.7 88.9 L78.5 86.4 Z" fill="#2a2a80"/><path d="M86.1 83.9 L88.4 86.4 L86.1 88.9 L83.9 86.4 Z" fill="#2a2a80"/><path d="M92.0 83.9 L94.2 86.4 L92.0 88.9 L89.8 86.4 Z" fill="#9020c0"/><path d="M94.7 83.9 L97.0 86.4 L94.7 88.9 L92.5 86.4 Z" fill="#9020c0"/><path d="M97.4 83.9 L99.7 86.4 L97.4 88.9 L95.2 86.4 Z" fill="#b020b0"/><path d="M100.1 83.9 L102.4 86.4 L100.1 88.9 L97.9 86.4 Z" fill="#902090"/><path d="M102.8 83.9 L105.1 86.4 L102.8 88.9 L100.6 86.4 Z" fill="#a03070"/><path d="M105.5 83.9 L107.8 86.4 L105.5 88.9 L103.3 86.4 Z" fill="#e060a0"/><path d="M108.2 83.9 L110.5 86.4 L108.2 88.9 L106.0 86.4 Z" fill="#c06050"/><path d="M110.9 83.9 L113.2 86.4 L110.9 88.9 L108.7 86.4 Z" fill="#9020c0"/><path d="M113.6 83.9 L115.9 86.4 L113.6 88.9 L111.4 86.4 Z" fill="#d03050"/><path d="M116.3 83.9 L118.6 86.4 L116.3 88.9 L114.1 86.4 Z" fill="#c04080"/><path d="M119.0 83.9 L121.3 86.4 L119.0 88.9 L116.8 86.4 Z" fill="#c040b0"/><path d="M121.7 83.9 L124.0 86.4 L121.7 88.9 L119.5 86.4 Z" fill="#c04080"/><path d="M124.4 83.9 L126.7 86.4 L124.4 88.9 L122.2 86.4 Z" fill="#902090"/><path d="M127.1 83.9 L129.4 86.4 L127.1 88.9 L124.9 86.4 Z" fill="#c06050"/><path d="M129.8 83.9 L132.1 86.4 L129.8 88.9 L127.6 86.4 Z" fill="#d050a0"/><path d="M132.5 83.9 L134.8 86.4 L132.5 88.9 L130.3 86.4 Z" fill="#e060a0"/><path d="M135.2 83.9 L137.5 86.4 L135.2 88.9 L133.0 86.4 Z" fill="#902090"/><path d="M137.9 83.9 L140.2 86.4 L137.9 88.9 L135.7 86.4 Z" fill="#c02070"/><path d="M140.6 83.9 L142.8 86.4 L140.6 88.9 L138.3 86.4 Z" fill="#c06050"/><path d="M143.3 83.9 L145.5 86.4 L143.3 88.9 L141.0 86.4 Z" fill="#c04080"/><path d="M146.0 83.9 L148.2 86.4 L146.0 88.9 L143.7 86.4 Z" fill="#a03070"/><path d="M148.7 83.9 L150.9 86.4 L148.7 88.9 L146.4 86.4 Z" fill="#c040b0"/><path d="M151.4 83.9 L153.6 86.4 L151.4 88.9 L149.1 86.4 Z" fill="#a020a0"/><path d="M154.1 83.9 L156.3 86.4 L154.1 88.9 L151.8 86.4 Z" fill="#d050a0"/><path d="M156.8 83.9 L159.0 86.4 L156.8 88.9 L154.5 86.4 Z" fill="#c06050"/><path d="M159.5 83.9 L161.7 86.4 L159.5 88.9 L157.2 86.4 Z" fill="#c04080"/><path d="M162.2 83.9 L164.4 86.4 L162.2 88.9 L159.9 86.4 Z" fill="#e060a0"/><path d="M164.9 83.9 L167.1 86.4 L164.9 88.9 L162.6 86.4 Z" fill="#c06050"/><path d="M167.6 83.9 L169.8 86.4 L167.6 88.9 L165.3 86.4 Z" fill="#9020c0"/><path d="M170.3 83.9 L172.5 86.4 L170.3 88.9 L168.0 86.4 Z" fill="#30a060"/><path d="M173.0 83.9 L175.2 86.4 L173.0 88.9 L170.7 86.4 Z" fill="#c06050"/><path d="M175.7 83.9 L177.9 86.4 L175.7 88.9 L173.4 86.4 Z" fill="#c04080"/><path d="M178.4 83.9 L180.6 86.4 L178.4 88.9 L176.1 86.4 Z" fill="#d050a0"/><path d="M181.1 83.9 L183.3 86.4 L181.1 88.9 L178.8 86.4 Z" fill="#c06050"/><path d="M183.8 83.9 L186.0 86.4 L183.8 88.9 L181.5 86.4 Z" fill="#9020c0"/><path d="M188.0 83.9 L190.2 86.4 L188.0 88.9 L185.8 86.4 Z" fill="#b01890"/><path d="M193.4 83.9 L195.6 86.4 L193.4 88.9 L191.1 86.4 Z" fill="#3a3aa0"/><path d="M196.1 83.9 L198.3 86.4 L196.1 88.9 L193.8 86.4 Z" fill="#4040b0"/><path d="M204.2 83.9 L206.4 86.4 L204.2 88.9 L201.9 86.4 Z" fill="#3a3aa0"/><path d="M209.6 83.9 L211.8 86.4 L209.6 88.9 L207.3 86.4 Z" fill="#b01890"/><path d="M220.4 83.9 L222.6 86.4 L220.4 88.9 L218.1 86.4 Z" fill="#b01890"/><path d="M231.2 83.9 L233.4 86.4 L231.2 88.9 L228.9 86.4 Z" fill="#3a3aa0"/><path d="M244.7 83.9 L246.9 86.4 L244.7 88.9 L242.4 86.4 Z" fill="#c020c0"/><path d="M247.4 83.9 L249.6 86.4 L247.4 88.9 L245.1 86.4 Z" fill="#4040b0"/><path d="M252.8 83.9 L255.0 86.4 L252.8 88.9 L250.5 86.4 Z" fill="#6a1a9a"/><path d="M269.0 83.9 L271.2 86.4 L269.0 88.9 L266.7 86.4 Z" fill="#8030d0"/><path d="M282.5 83.9 L284.7 86.4 L282.5 88.9 L280.2 86.4 Z" fill="#6a1a9a"/><path d="M285.2 83.9 L287.4 86.4 L285.2 88.9 L282.9 86.4 Z" fill="#8030d0"/><path d="M290.6 83.9 L292.8 86.4 L290.6 88.9 L288.3 86.4 Z" fill="#3050c0"/><path d="M293.3 83.9 L295.5 86.4 L293.3 88.9 L291.0 86.4 Z" fill="#6a1a9a"/><path d="M298.7 83.9 L300.9 86.4 L298.7 88.9 L296.4 86.4 Z" fill="#6a1a9a"/><path d="M19.0 88.2 L21.2 90.7 L19.0 93.2 L16.8 90.7 Z" fill="#7a10c0"/><path d="M21.7 88.2 L23.9 90.7 L21.7 93.2 L19.4 90.7 Z" fill="#c030a0"/><path d="M24.4 88.2 L26.6 90.7 L24.4 93.2 L22.1 90.7 Z" fill="#6a10b0"/><path d="M27.1 88.2 L29.3 90.7 L27.1 93.2 L24.8 90.7 Z" fill="#8020c0"/><path d="M29.8 88.2 L32.0 90.7 L29.8 93.2 L27.5 90.7 Z" fill="#7a1ab8"/><path d="M32.5 88.2 L34.8 90.7 L32.5 93.2 L30.2 90.7 Z" fill="#6a10b0"/><path d="M35.2 88.2 L37.5 90.7 L35.2 93.2 L33.0 90.7 Z" fill="#3030c0"/><path d="M37.9 88.2 L40.2 90.7 L37.9 93.2 L35.7 90.7 Z" fill="#8020c0"/><path d="M40.6 88.2 L42.9 90.7 L40.6 93.2 L38.4 90.7 Z" fill="#a010b0"/><path d="M43.3 88.2 L45.6 90.7 L43.3 93.2 L41.1 90.7 Z" fill="#c030a0"/><path d="M46.0 88.2 L48.3 90.7 L46.0 93.2 L43.8 90.7 Z" fill="#7a1ab8"/><path d="M48.7 88.2 L51.0 90.7 L48.7 93.2 L46.5 90.7 Z" fill="#3030c0"/><path d="M51.4 88.2 L53.7 90.7 L51.4 93.2 L49.2 90.7 Z" fill="#9a10a8"/><path d="M54.1 88.2 L56.4 90.7 L54.1 93.2 L51.9 90.7 Z" fill="#208080"/><path d="M56.8 88.2 L59.1 90.7 L56.8 93.2 L54.6 90.7 Z" fill="#a010b0"/><path d="M59.5 88.2 L61.8 90.7 L59.5 93.2 L57.3 90.7 Z" fill="#7a10c0"/><path d="M62.2 88.2 L64.5 90.7 L62.2 93.2 L60.0 90.7 Z" fill="#a010b0"/><path d="M64.9 88.2 L67.2 90.7 L64.9 93.2 L62.7 90.7 Z" fill="#3030c0"/><path d="M67.6 88.2 L69.9 90.7 L67.6 93.2 L65.4 90.7 Z" fill="#5a10a0"/><path d="M70.3 88.2 L72.6 90.7 L70.3 93.2 L68.1 90.7 Z" fill="#107050"/><path d="M73.0 88.2 L75.3 90.7 L73.0 93.2 L70.8 90.7 Z" fill="#a010b0"/><path d="M75.7 88.2 L78.0 90.7 L75.7 93.2 L73.5 90.7 Z" fill="#208080"/><path d="M78.0 88.2 L80.2 90.7 L78.0 93.2 L75.8 90.7 Z" fill="#3050c0"/><path d="M80.7 88.2 L83.0 90.7 L80.7 93.2 L78.5 90.7 Z" fill="#3050c0"/><path d="M88.8 88.2 L91.1 90.7 L88.8 93.2 L86.6 90.7 Z" fill="#7020a0"/><path d="M92.0 88.2 L94.2 90.7 L92.0 93.2 L89.8 90.7 Z" fill="#c04080"/><path d="M94.7 88.2 L97.0 90.7 L94.7 93.2 L92.5 90.7 Z" fill="#a03070"/><path d="M97.4 88.2 L99.7 90.7 L97.4 93.2 L95.2 90.7 Z" fill="#e060a0"/><path d="M100.1 88.2 L102.4 90.7 L100.1 93.2 L97.9 90.7 Z" fill="#c04080"/><path d="M102.8 88.2 L105.1 90.7 L102.8 93.2 L100.6 90.7 Z" fill="#e060a0"/><path d="M105.5 88.2 L107.8 90.7 L105.5 93.2 L103.3 90.7 Z" fill="#c040b0"/><path d="M108.2 88.2 L110.5 90.7 L108.2 93.2 L106.0 90.7 Z" fill="#30a060"/><path d="M110.9 88.2 L113.2 90.7 L110.9 93.2 L108.7 90.7 Z" fill="#e060a0"/><path d="M113.6 88.2 L115.9 90.7 L113.6 93.2 L111.4 90.7 Z" fill="#9020c0"/><path d="M116.3 88.2 L118.6 90.7 L116.3 93.2 L114.1 90.7 Z" fill="#d03050"/><path d="M119.0 88.2 L121.3 90.7 L119.0 93.2 L116.8 90.7 Z" fill="#c040b0"/><path d="M121.7 88.2 L124.0 90.7 L121.7 93.2 L119.5 90.7 Z" fill="#e060a0"/><path d="M124.4 88.2 L126.7 90.7 L124.4 93.2 L122.2 90.7 Z" fill="#c02070"/><path d="M127.1 88.2 L129.4 90.7 L127.1 93.2 L124.9 90.7 Z" fill="#e060a0"/><path d="M129.8 88.2 L132.1 90.7 L129.8 93.2 L127.6 90.7 Z" fill="#d050a0"/><path d="M132.5 88.2 L134.8 90.7 L132.5 93.2 L130.3 90.7 Z" fill="#d050a0"/><path d="M135.2 88.2 L137.5 90.7 L135.2 93.2 L133.0 90.7 Z" fill="#c06050"/><path d="M137.9 88.2 L140.2 90.7 L137.9 93.2 L135.7 90.7 Z" fill="#c04080"/><path d="M140.6 88.2 L142.8 90.7 L140.6 93.2 L138.3 90.7 Z" fill="#c06050"/><path d="M143.3 88.2 L145.5 90.7 L143.3 93.2 L141.0 90.7 Z" fill="#c040b0"/><path d="M146.0 88.2 L148.2 90.7 L146.0 93.2 L143.7 90.7 Z" fill="#c040b0"/><path d="M148.7 88.2 L150.9 90.7 L148.7 93.2 L146.4 90.7 Z" fill="#e060a0"/><path d="M151.4 88.2 L153.6 90.7 L151.4 93.2 L149.1 90.7 Z" fill="#30a060"/><path d="M154.1 88.2 L156.3 90.7 L154.1 93.2 L151.8 90.7 Z" fill="#e060a0"/><path d="M156.8 88.2 L159.0 90.7 L156.8 93.2 L154.5 90.7 Z" fill="#a020a0"/><path d="M159.5 88.2 L161.7 90.7 L159.5 93.2 L157.2 90.7 Z" fill="#d03050"/><path d="M162.2 88.2 L164.4 90.7 L162.2 93.2 L159.9 90.7 Z" fill="#d03050"/><path d="M164.9 88.2 L167.1 90.7 L164.9 93.2 L162.6 90.7 Z" fill="#c02070"/><path d="M167.6 88.2 L169.8 90.7 L167.6 93.2 L165.3 90.7 Z" fill="#902090"/><path d="M170.3 88.2 L172.5 90.7 L170.3 93.2 L168.0 90.7 Z" fill="#a03070"/><path d="M173.0 88.2 L175.2 90.7 L173.0 93.2 L170.7 90.7 Z" fill="#a020a0"/><path d="M175.7 88.2 L177.9 90.7 L175.7 93.2 L173.4 90.7 Z" fill="#a03070"/><path d="M178.4 88.2 L180.6 90.7 L178.4 93.2 L176.1 90.7 Z" fill="#c06050"/><path d="M181.1 88.2 L183.3 90.7 L181.1 93.2 L178.8 90.7 Z" fill="#d03050"/><path d="M183.8 88.2 L186.0 90.7 L183.8 93.2 L181.5 90.7 Z" fill="#902090"/><path d="M188.0 88.2 L190.2 90.7 L188.0 93.2 L185.8 90.7 Z" fill="#3050c0"/><path d="M190.7 88.2 L192.9 90.7 L190.7 93.2 L188.4 90.7 Z" fill="#b01890"/><path d="M196.1 88.2 L198.3 90.7 L196.1 93.2 L193.8 90.7 Z" fill="#e050c0"/><path d="M198.8 88.2 L201.0 90.7 L198.8 93.2 L196.5 90.7 Z" fill="#b01890"/><path d="M206.9 88.2 L209.1 90.7 L206.9 93.2 L204.6 90.7 Z" fill="#4040b0"/><path d="M215.0 88.2 L217.2 90.7 L215.0 93.2 L212.7 90.7 Z" fill="#3050c0"/><path d="M217.7 88.2 L219.9 90.7 L217.7 93.2 L215.4 90.7 Z" fill="#e050c0"/><path d="M220.4 88.2 L222.6 90.7 L220.4 93.2 L218.1 90.7 Z" fill="#8030d0"/><path d="M223.1 88.2 L225.3 90.7 L223.1 93.2 L220.8 90.7 Z" fill="#4040b0"/><path d="M225.8 88.2 L228.0 90.7 L225.8 93.2 L223.5 90.7 Z" fill="#3a3aa0"/><path d="M228.5 88.2 L230.7 90.7 L228.5 93.2 L226.2 90.7 Z" fill="#c020c0"/><path d="M233.9 88.2 L236.1 90.7 L233.9 93.2 L231.6 90.7 Z" fill="#a030a0"/><path d="M239.3 88.2 L241.5 90.7 L239.3 93.2 L237.0 90.7 Z" fill="#d0a040"/><path d="M242.0 88.2 L244.2 90.7 L242.0 93.2 L239.7 90.7 Z" fill="#c020c0"/><path d="M250.1 88.2 L252.3 90.7 L250.1 93.2 L247.8 90.7 Z" fill="#b01890"/><path d="M260.9 88.2 L263.1 90.7 L260.9 93.2 L258.6 90.7 Z" fill="#3050c0"/><path d="M263.6 88.2 L265.8 90.7 L263.6 93.2 L261.3 90.7 Z" fill="#6a1a9a"/><path d="M269.0 88.2 L271.2 90.7 L269.0 93.2 L266.7 90.7 Z" fill="#c020c0"/><path d="M271.7 88.2 L273.9 90.7 L271.7 93.2 L269.4 90.7 Z" fill="#a030a0"/><path d="M285.2 88.2 L287.4 90.7 L285.2 93.2 L282.9 90.7 Z" fill="#a030a0"/><path d="M186.0 75.3 L188.2 77.8 L186.0 80.3 L183.8 77.8 Z" fill="#702070"/><path d="M188.7 75.3 L190.9 77.8 L188.7 80.3 L186.4 77.8 Z" fill="#6a2a70"/><path d="M191.4 75.3 L193.6 77.8 L191.4 80.3 L189.1 77.8 Z" fill="#6a2a70"/><path d="M194.1 75.3 L196.3 77.8 L194.1 80.3 L191.8 77.8 Z" fill="#7a2060"/><path d="M196.8 75.3 L199.0 77.8 L196.8 80.3 L194.5 77.8 Z" fill="#801850"/><path d="M199.5 75.3 L201.7 77.8 L199.5 80.3 L197.2 77.8 Z" fill="#702070"/><path d="M202.2 75.3 L204.4 77.8 L202.2 80.3 L199.9 77.8 Z" fill="#801850"/><path d="M204.9 75.3 L207.1 77.8 L204.9 80.3 L202.6 77.8 Z" fill="#902060"/><path d="M207.6 75.3 L209.8 77.8 L207.6 80.3 L205.3 77.8 Z" fill="#6a2a70"/><path d="M210.3 75.3 L212.5 77.8 L210.3 80.3 L208.0 77.8 Z" fill="#6a2a70"/><path d="M213.0 75.3 L215.2 77.8 L213.0 80.3 L210.7 77.8 Z" fill="#801850"/><path d="M215.7 75.3 L217.9 77.8 L215.7 80.3 L213.4 77.8 Z" fill="#902060"/><path d="M218.4 75.3 L220.6 77.8 L218.4 80.3 L216.1 77.8 Z" fill="#803040"/><path d="M221.1 75.3 L223.3 77.8 L221.1 80.3 L218.8 77.8 Z" fill="#902060"/><path d="M223.8 75.3 L226.0 77.8 L223.8 80.3 L221.5 77.8 Z" fill="#803040"/><path d="M226.5 75.3 L228.7 77.8 L226.5 80.3 L224.2 77.8 Z" fill="#803040"/><path d="M229.2 75.3 L231.4 77.8 L229.2 80.3 L226.9 77.8 Z" fill="#7a2060"/><path d="M231.9 75.3 L234.1 77.8 L231.9 80.3 L229.6 77.8 Z" fill="#902060"/><path d="M234.6 75.3 L236.8 77.8 L234.6 80.3 L232.3 77.8 Z" fill="#702070"/><path d="M237.3 75.3 L239.5 77.8 L237.3 80.3 L235.0 77.8 Z" fill="#702070"/><path d="M240.0 75.3 L242.2 77.8 L240.0 80.3 L237.7 77.8 Z" fill="#801850"/><path d="M242.7 75.3 L244.9 77.8 L242.7 80.3 L240.4 77.8 Z" fill="#6a2a70"/><path d="M245.4 75.3 L247.6 77.8 L245.4 80.3 L243.1 77.8 Z" fill="#801850"/><path d="M248.1 75.3 L250.3 77.8 L248.1 80.3 L245.8 77.8 Z" fill="#7a2060"/><path d="M250.8 75.3 L253.0 77.8 L250.8 80.3 L248.5 77.8 Z" fill="#6a2a70"/><path d="M253.5 75.3 L255.7 77.8 L253.5 80.3 L251.2 77.8 Z" fill="#902060"/><path d="M256.2 75.3 L258.4 77.8 L256.2 80.3 L253.9 77.8 Z" fill="#7a2060"/><path d="M258.9 75.3 L261.1 77.8 L258.9 80.3 L256.6 77.8 Z" fill="#702070"/><path d="M261.6 75.3 L263.8 77.8 L261.6 80.3 L259.3 77.8 Z" fill="#6a2a70"/><path d="M264.3 75.3 L266.5 77.8 L264.3 80.3 L262.0 77.8 Z" fill="#7a2060"/><path d="M267.0 75.3 L269.2 77.8 L267.0 80.3 L264.7 77.8 Z" fill="#7a2060"/><path d="M269.7 75.3 L271.9 77.8 L269.7 80.3 L267.4 77.8 Z" fill="#902060"/><path d="M272.4 75.3 L274.6 77.8 L272.4 80.3 L270.1 77.8 Z" fill="#803040"/><path d="M275.1 75.3 L277.3 77.8 L275.1 80.3 L272.8 77.8 Z" fill="#7a2060"/><path d="M277.8 75.3 L280.0 77.8 L277.8 80.3 L275.5 77.8 Z" fill="#902060"/><path d="M280.5 75.3 L282.7 77.8 L280.5 80.3 L278.2 77.8 Z" fill="#702070"/><path d="M283.2 75.3 L285.4 77.8 L283.2 80.3 L280.9 77.8 Z" fill="#702070"/><path d="M285.9 75.3 L288.1 77.8 L285.9 80.3 L283.6 77.8 Z" fill="#902060"/><path d="M288.6 75.3 L290.8 77.8 L288.6 80.3 L286.3 77.8 Z" fill="#803040"/><path d="M291.3 75.3 L293.5 77.8 L291.3 80.3 L289.0 77.8 Z" fill="#702070"/><path d="M294.0 75.3 L296.2 77.8 L294.0 80.3 L291.7 77.8 Z" fill="#7a2060"/><path d="M296.7 75.3 L298.9 77.8 L296.7 80.3 L294.4 77.8 Z" fill="#6a2a70"/><path d="M299.4 75.3 L301.6 77.8 L299.4 80.3 L297.1 77.8 Z" fill="#803040"/><path d="M302.1 75.3 L304.3 77.8 L302.1 80.3 L299.8 77.8 Z" fill="#7a2060"/><path d="M19.0 92.5 L21.2 95.0 L19.0 97.5 L16.8 95.0 Z" fill="#209080"/><path d="M21.7 92.5 L23.9 95.0 L21.7 97.5 L19.4 95.0 Z" fill="#208070"/><path d="M24.4 92.5 L26.6 95.0 L24.4 97.5 L22.1 95.0 Z" fill="#109070"/><path d="M27.1 92.5 L29.3 95.0 L27.1 97.5 L24.8 95.0 Z" fill="#30a070"/><path d="M29.8 92.5 L32.0 95.0 L29.8 97.5 L27.5 95.0 Z" fill="#109070"/><path d="M32.5 92.5 L34.8 95.0 L32.5 97.5 L30.2 95.0 Z" fill="#109070"/><path d="M35.2 92.5 L37.5 95.0 L35.2 97.5 L33.0 95.0 Z" fill="#209080"/><path d="M37.9 92.5 L40.2 95.0 L37.9 97.5 L35.7 95.0 Z" fill="#3070c0"/><path d="M40.6 92.5 L42.9 95.0 L40.6 97.5 L38.4 95.0 Z" fill="#109070"/><path d="M43.3 92.5 L45.6 95.0 L43.3 97.5 L41.1 95.0 Z" fill="#109070"/><path d="M46.0 92.5 L48.3 95.0 L46.0 97.5 L43.8 95.0 Z" fill="#3070c0"/><path d="M48.7 92.5 L51.0 95.0 L48.7 97.5 L46.5 95.0 Z" fill="#30a070"/><path d="M51.4 92.5 L53.7 95.0 L51.4 97.5 L49.2 95.0 Z" fill="#3070c0"/><path d="M54.1 92.5 L56.4 95.0 L54.1 97.5 L51.9 95.0 Z" fill="#209080"/><path d="M56.8 92.5 L59.1 95.0 L56.8 97.5 L54.6 95.0 Z" fill="#3070c0"/><path d="M59.5 92.5 L61.8 95.0 L59.5 97.5 L57.3 95.0 Z" fill="#30a070"/><path d="M62.2 92.5 L64.5 95.0 L62.2 97.5 L60.0 95.0 Z" fill="#209080"/><path d="M64.9 92.5 L67.2 95.0 L64.9 97.5 L62.7 95.0 Z" fill="#208070"/><path d="M67.6 92.5 L69.9 95.0 L67.6 97.5 L65.4 95.0 Z" fill="#3070c0"/><path d="M70.3 92.5 L72.6 95.0 L70.3 97.5 L68.1 95.0 Z" fill="#30a070"/><path d="M73.0 92.5 L75.3 95.0 L73.0 97.5 L70.8 95.0 Z" fill="#109070"/><path d="M75.7 92.5 L78.0 95.0 L75.7 97.5 L73.5 95.0 Z" fill="#3070c0"/><path d="M78.4 92.5 L80.7 95.0 L78.4 97.5 L76.2 95.0 Z" fill="#30a070"/><path d="M81.1 92.5 L83.4 95.0 L81.1 97.5 L78.9 95.0 Z" fill="#3070c0"/><path d="M83.8 92.5 L86.1 95.0 L83.8 97.5 L81.6 95.0 Z" fill="#30a070"/><path d="M86.5 92.5 L88.8 95.0 L86.5 97.5 L84.3 95.0 Z" fill="#30a070"/><path d="M89.2 92.5 L91.5 95.0 L89.2 97.5 L87.0 95.0 Z" fill="#109070"/><path d="M91.9 92.5 L94.2 95.0 L91.9 97.5 L89.7 95.0 Z" fill="#209080"/><path d="M94.6 92.5 L96.9 95.0 L94.6 97.5 L92.4 95.0 Z" fill="#30a070"/><path d="M97.3 92.5 L99.6 95.0 L97.3 97.5 L95.1 95.0 Z" fill="#209080"/><path d="M100.0 92.5 L102.3 95.0 L100.0 97.5 L97.8 95.0 Z" fill="#109070"/><path d="M102.7 92.5 L105.0 95.0 L102.7 97.5 L100.5 95.0 Z" fill="#206090"/><path d="M105.4 92.5 L107.7 95.0 L105.4 97.5 L103.2 95.0 Z" fill="#3070c0"/><path d="M108.1 92.5 L110.4 95.0 L108.1 97.5 L105.9 95.0 Z" fill="#206090"/><path d="M110.8 92.5 L113.1 95.0 L110.8 97.5 L108.6 95.0 Z" fill="#109070"/><path d="M113.5 92.5 L115.8 95.0 L113.5 97.5 L111.3 95.0 Z" fill="#3070c0"/><path d="M116.2 92.5 L118.5 95.0 L116.2 97.5 L114.0 95.0 Z" fill="#3070c0"/><path d="M118.9 92.5 L121.2 95.0 L118.9 97.5 L116.7 95.0 Z" fill="#206090"/><path d="M121.6 92.5 L123.9 95.0 L121.6 97.5 L119.4 95.0 Z" fill="#109070"/><path d="M124.3 92.5 L126.6 95.0 L124.3 97.5 L122.1 95.0 Z" fill="#209080"/><path d="M127.0 92.5 L129.3 95.0 L127.0 97.5 L124.8 95.0 Z" fill="#208070"/><path d="M129.7 92.5 L132.0 95.0 L129.7 97.5 L127.5 95.0 Z" fill="#109070"/><path d="M132.4 92.5 L134.7 95.0 L132.4 97.5 L130.2 95.0 Z" fill="#30a070"/><path d="M135.1 92.5 L137.4 95.0 L135.1 97.5 L132.9 95.0 Z" fill="#30a070"/><path d="M137.8 92.5 L140.1 95.0 L137.8 97.5 L135.6 95.0 Z" fill="#208070"/><path d="M140.5 92.5 L142.8 95.0 L140.5 97.5 L138.3 95.0 Z" fill="#208070"/><path d="M143.2 92.5 L145.5 95.0 L143.2 97.5 L141.0 95.0 Z" fill="#109070"/><path d="M145.9 92.5 L148.2 95.0 L145.9 97.5 L143.7 95.0 Z" fill="#109070"/><path d="M148.6 92.5 L150.9 95.0 L148.6 97.5 L146.4 95.0 Z" fill="#206090"/><path d="M151.3 92.5 L153.6 95.0 L151.3 97.5 L149.1 95.0 Z" fill="#3070c0"/><path d="M154.0 92.5 L156.2 95.0 L154.0 97.5 L151.8 95.0 Z" fill="#206090"/><path d="M156.7 92.5 L158.9 95.0 L156.7 97.5 L154.4 95.0 Z" fill="#208070"/><path d="M159.4 92.5 L161.6 95.0 L159.4 97.5 L157.1 95.0 Z" fill="#208070"/><path d="M162.1 92.5 L164.3 95.0 L162.1 97.5 L159.8 95.0 Z" fill="#209080"/><path d="M164.8 92.5 L167.0 95.0 L164.8 97.5 L162.5 95.0 Z" fill="#30a070"/><path d="M167.5 92.5 L169.7 95.0 L167.5 97.5 L165.2 95.0 Z" fill="#3070c0"/><path d="M170.2 92.5 L172.4 95.0 L170.2 97.5 L167.9 95.0 Z" fill="#30a070"/><path d="M172.9 92.5 L175.1 95.0 L172.9 97.5 L170.6 95.0 Z" fill="#209080"/><path d="M175.6 92.5 L177.8 95.0 L175.6 97.5 L173.3 95.0 Z" fill="#209080"/><path d="M178.3 92.5 L180.5 95.0 L178.3 97.5 L176.0 95.0 Z" fill="#30a070"/><path d="M181.0 92.5 L183.2 95.0 L181.0 97.5 L178.7 95.0 Z" fill="#109070"/><path d="M183.7 92.5 L185.9 95.0 L183.7 97.5 L181.4 95.0 Z" fill="#208070"/><path d="M186.4 92.5 L188.6 95.0 L186.4 97.5 L184.1 95.0 Z" fill="#30a070"/><path d="M189.1 92.5 L191.3 95.0 L189.1 97.5 L186.8 95.0 Z" fill="#109070"/><path d="M191.8 92.5 L194.0 95.0 L191.8 97.5 L189.5 95.0 Z" fill="#206090"/><path d="M194.5 92.5 L196.7 95.0 L194.5 97.5 L192.2 95.0 Z" fill="#109070"/><path d="M197.2 92.5 L199.4 95.0 L197.2 97.5 L194.9 95.0 Z" fill="#3070c0"/><path d="M199.9 92.5 L202.1 95.0 L199.9 97.5 L197.6 95.0 Z" fill="#206090"/><path d="M202.6 92.5 L204.8 95.0 L202.6 97.5 L200.3 95.0 Z" fill="#3070c0"/><path d="M205.3 92.5 L207.5 95.0 L205.3 97.5 L203.0 95.0 Z" fill="#208070"/><path d="M208.0 92.5 L210.2 95.0 L208.0 97.5 L205.7 95.0 Z" fill="#208070"/><path d="M210.7 92.5 L212.9 95.0 L210.7 97.5 L208.4 95.0 Z" fill="#208070"/><path d="M213.4 92.5 L215.6 95.0 L213.4 97.5 L211.1 95.0 Z" fill="#206090"/><path d="M216.1 92.5 L218.3 95.0 L216.1 97.5 L213.8 95.0 Z" fill="#209080"/><path d="M218.8 92.5 L221.0 95.0 L218.8 97.5 L216.5 95.0 Z" fill="#208070"/><path d="M221.5 92.5 L223.7 95.0 L221.5 97.5 L219.2 95.0 Z" fill="#208070"/><path d="M224.2 92.5 L226.4 95.0 L224.2 97.5 L221.9 95.0 Z" fill="#209080"/><path d="M226.9 92.5 L229.1 95.0 L226.9 97.5 L224.6 95.0 Z" fill="#209080"/><path d="M229.6 92.5 L231.8 95.0 L229.6 97.5 L227.3 95.0 Z" fill="#30a070"/><path d="M232.3 92.5 L234.5 95.0 L232.3 97.5 L230.0 95.0 Z" fill="#208070"/><path d="M235.0 92.5 L237.2 95.0 L235.0 97.5 L232.7 95.0 Z" fill="#3070c0"/><path d="M237.7 92.5 L239.9 95.0 L237.7 97.5 L235.4 95.0 Z" fill="#3070c0"/><path d="M240.4 92.5 L242.6 95.0 L240.4 97.5 L238.1 95.0 Z" fill="#209080"/><path d="M243.1 92.5 L245.3 95.0 L243.1 97.5 L240.8 95.0 Z" fill="#206090"/><path d="M245.8 92.5 L248.0 95.0 L245.8 97.5 L243.5 95.0 Z" fill="#209080"/><path d="M248.5 92.5 L250.7 95.0 L248.5 97.5 L246.2 95.0 Z" fill="#208070"/><path d="M251.2 92.5 L253.4 95.0 L251.2 97.5 L248.9 95.0 Z" fill="#3070c0"/><path d="M253.9 92.5 L256.1 95.0 L253.9 97.5 L251.6 95.0 Z" fill="#109070"/><path d="M256.6 92.5 L258.8 95.0 L256.6 97.5 L254.3 95.0 Z" fill="#209080"/><path d="M259.3 92.5 L261.5 95.0 L259.3 97.5 L257.0 95.0 Z" fill="#109070"/><path d="M262.0 92.5 L264.2 95.0 L262.0 97.5 L259.7 95.0 Z" fill="#208070"/><path d="M264.7 92.5 L266.9 95.0 L264.7 97.5 L262.4 95.0 Z" fill="#3070c0"/><path d="M267.4 92.5 L269.6 95.0 L267.4 97.5 L265.1 95.0 Z" fill="#208070"/><path d="M270.1 92.5 L272.3 95.0 L270.1 97.5 L267.8 95.0 Z" fill="#209080"/><path d="M272.8 92.5 L275.0 95.0 L272.8 97.5 L270.5 95.0 Z" fill="#109070"/><path d="M275.5 92.5 L277.7 95.0 L275.5 97.5 L273.2 95.0 Z" fill="#209080"/><path d="M278.2 92.5 L280.4 95.0 L278.2 97.5 L275.9 95.0 Z" fill="#30a070"/><path d="M280.9 92.5 L283.1 95.0 L280.9 97.5 L278.6 95.0 Z" fill="#208070"/><path d="M283.6 92.5 L285.8 95.0 L283.6 97.5 L281.3 95.0 Z" fill="#209080"/><path d="M286.3 92.5 L288.5 95.0 L286.3 97.5 L284.0 95.0 Z" fill="#30a070"/><path d="M289.0 92.5 L291.2 95.0 L289.0 97.5 L286.7 95.0 Z" fill="#209080"/><path d="M291.7 92.5 L293.9 95.0 L291.7 97.5 L289.4 95.0 Z" fill="#30a070"/><path d="M294.4 92.5 L296.6 95.0 L294.4 97.5 L292.1 95.0 Z" fill="#208070"/><path d="M297.1 92.5 L299.3 95.0 L297.1 97.5 L294.8 95.0 Z" fill="#209080"/><path d="M299.8 92.5 L302.0 95.0 L299.8 97.5 L297.5 95.0 Z" fill="#30a070"/><path d="M302.5 92.5 L304.7 95.0 L302.5 97.5 L300.2 95.0 Z" fill="#30a070"/><path d="M19.0 96.8 L21.2 99.3 L19.0 101.8 L16.8 99.3 Z" fill="#3050d0"/><path d="M21.7 96.8 L23.9 99.3 L21.7 101.8 L19.4 99.3 Z" fill="#4060d0"/><path d="M24.4 96.8 L26.6 99.3 L24.4 101.8 L22.1 99.3 Z" fill="#c030b0"/><path d="M27.1 96.8 L29.3 99.3 L27.1 101.8 L24.8 99.3 Z" fill="#8040c0"/><path d="M29.8 96.8 L32.0 99.3 L29.8 101.8 L27.5 99.3 Z" fill="#3070c0"/><path d="M32.5 96.8 L34.8 99.3 L32.5 101.8 L30.2 99.3 Z" fill="#8040c0"/><path d="M35.2 96.8 L37.5 99.3 L35.2 101.8 L33.0 99.3 Z" fill="#5050c0"/><path d="M37.9 96.8 L40.2 99.3 L37.9 101.8 L35.7 99.3 Z" fill="#8040c0"/><path d="M40.6 96.8 L42.9 99.3 L40.6 101.8 L38.4 99.3 Z" fill="#8040c0"/><path d="M43.3 96.8 L45.6 99.3 L43.3 101.8 L41.1 99.3 Z" fill="#4060d0"/><path d="M46.0 96.8 L48.3 99.3 L46.0 101.8 L43.8 99.3 Z" fill="#3070c0"/><path d="M48.7 96.8 L51.0 99.3 L48.7 101.8 L46.5 99.3 Z" fill="#5050c0"/><path d="M51.4 96.8 L53.7 99.3 L51.4 101.8 L49.2 99.3 Z" fill="#4060d0"/><path d="M54.1 96.8 L56.4 99.3 L54.1 101.8 L51.9 99.3 Z" fill="#3050d0"/><path d="M56.8 96.8 L59.1 99.3 L56.8 101.8 L54.6 99.3 Z" fill="#8040c0"/><path d="M59.5 96.8 L61.8 99.3 L59.5 101.8 L57.3 99.3 Z" fill="#c030b0"/><path d="M62.2 96.8 L64.5 99.3 L62.2 101.8 L60.0 99.3 Z" fill="#3050d0"/><path d="M64.9 96.8 L67.2 99.3 L64.9 101.8 L62.7 99.3 Z" fill="#5050c0"/><path d="M67.6 96.8 L69.9 99.3 L67.6 101.8 L65.4 99.3 Z" fill="#5050c0"/><path d="M70.3 96.8 L72.6 99.3 L70.3 101.8 L68.1 99.3 Z" fill="#4060d0"/><path d="M73.0 96.8 L75.3 99.3 L73.0 101.8 L70.8 99.3 Z" fill="#8040c0"/><path d="M75.7 96.8 L78.0 99.3 L75.7 101.8 L73.5 99.3 Z" fill="#5050c0"/><path d="M78.4 96.8 L80.7 99.3 L78.4 101.8 L76.2 99.3 Z" fill="#4060d0"/><path d="M81.1 96.8 L83.4 99.3 L81.1 101.8 L78.9 99.3 Z" fill="#8040c0"/><path d="M83.8 96.8 L86.1 99.3 L83.8 101.8 L81.6 99.3 Z" fill="#c030b0"/><path d="M86.5 96.8 L88.8 99.3 L86.5 101.8 L84.3 99.3 Z" fill="#8040c0"/><path d="M89.2 96.8 L91.5 99.3 L89.2 101.8 L87.0 99.3 Z" fill="#3050d0"/><path d="M91.9 96.8 L94.2 99.3 L91.9 101.8 L89.7 99.3 Z" fill="#5050c0"/><path d="M94.6 96.8 L96.9 99.3 L94.6 101.8 L92.4 99.3 Z" fill="#5050c0"/><path d="M97.3 96.8 L99.6 99.3 L97.3 101.8 L95.1 99.3 Z" fill="#c030b0"/><path d="M100.0 96.8 L102.3 99.3 L100.0 101.8 L97.8 99.3 Z" fill="#8040c0"/><path d="M102.7 96.8 L105.0 99.3 L102.7 101.8 L100.5 99.3 Z" fill="#5050c0"/><path d="M105.4 96.8 L107.7 99.3 L105.4 101.8 L103.2 99.3 Z" fill="#c030b0"/><path d="M108.1 96.8 L110.4 99.3 L108.1 101.8 L105.9 99.3 Z" fill="#3070c0"/><path d="M110.8 96.8 L113.1 99.3 L110.8 101.8 L108.6 99.3 Z" fill="#5050c0"/><path d="M113.5 96.8 L115.8 99.3 L113.5 101.8 L111.3 99.3 Z" fill="#5050c0"/><path d="M116.2 96.8 L118.5 99.3 L116.2 101.8 L114.0 99.3 Z" fill="#c030b0"/><path d="M118.9 96.8 L121.2 99.3 L118.9 101.8 L116.7 99.3 Z" fill="#3050d0"/><path d="M121.6 96.8 L123.9 99.3 L121.6 101.8 L119.4 99.3 Z" fill="#3070c0"/><path d="M124.3 96.8 L126.6 99.3 L124.3 101.8 L122.1 99.3 Z" fill="#c030b0"/><path d="M127.0 96.8 L129.3 99.3 L127.0 101.8 L124.8 99.3 Z" fill="#3050d0"/><path d="M129.7 96.8 L132.0 99.3 L129.7 101.8 L127.5 99.3 Z" fill="#3050d0"/><path d="M132.4 96.8 L134.7 99.3 L132.4 101.8 L130.2 99.3 Z" fill="#c030b0"/><path d="M135.1 96.8 L137.4 99.3 L135.1 101.8 L132.9 99.3 Z" fill="#8040c0"/><path d="M137.8 96.8 L140.1 99.3 L137.8 101.8 L135.6 99.3 Z" fill="#8040c0"/><path d="M140.5 96.8 L142.8 99.3 L140.5 101.8 L138.3 99.3 Z" fill="#5050c0"/><path d="M143.2 96.8 L145.5 99.3 L143.2 101.8 L141.0 99.3 Z" fill="#c030b0"/><path d="M145.9 96.8 L148.2 99.3 L145.9 101.8 L143.7 99.3 Z" fill="#8040c0"/><path d="M148.6 96.8 L150.9 99.3 L148.6 101.8 L146.4 99.3 Z" fill="#c030b0"/><path d="M151.3 96.8 L153.6 99.3 L151.3 101.8 L149.1 99.3 Z" fill="#8040c0"/><path d="M154.0 96.8 L156.2 99.3 L154.0 101.8 L151.8 99.3 Z" fill="#8040c0"/><path d="M156.7 96.8 L158.9 99.3 L156.7 101.8 L154.4 99.3 Z" fill="#4060d0"/><path d="M159.4 96.8 L161.6 99.3 L159.4 101.8 L157.1 99.3 Z" fill="#8040c0"/><path d="M162.1 96.8 L164.3 99.3 L162.1 101.8 L159.8 99.3 Z" fill="#8040c0"/><path d="M164.8 96.8 L167.0 99.3 L164.8 101.8 L162.5 99.3 Z" fill="#3050d0"/><path d="M167.5 96.8 L169.7 99.3 L167.5 101.8 L165.2 99.3 Z" fill="#3050d0"/><path d="M170.2 96.8 L172.4 99.3 L170.2 101.8 L167.9 99.3 Z" fill="#3050d0"/><path d="M172.9 96.8 L175.1 99.3 L172.9 101.8 L170.6 99.3 Z" fill="#3050d0"/><path d="M175.6 96.8 L177.8 99.3 L175.6 101.8 L173.3 99.3 Z" fill="#4060d0"/><path d="M178.3 96.8 L180.5 99.3 L178.3 101.8 L176.0 99.3 Z" fill="#8040c0"/><path d="M181.0 96.8 L183.2 99.3 L181.0 101.8 L178.7 99.3 Z" fill="#5050c0"/><path d="M183.7 96.8 L185.9 99.3 L183.7 101.8 L181.4 99.3 Z" fill="#4060d0"/><path d="M186.4 96.8 L188.6 99.3 L186.4 101.8 L184.1 99.3 Z" fill="#3050d0"/><path d="M189.1 96.8 L191.3 99.3 L189.1 101.8 L186.8 99.3 Z" fill="#4060d0"/><path d="M192.0 96.8 L194.2 99.3 L192.0 101.8 L189.8 99.3 Z" fill="#a02090"/><path d="M194.7 96.8 L196.9 99.3 L194.7 101.8 L192.4 99.3 Z" fill="#c030b0"/><path d="M202.8 96.8 L205.0 99.3 L202.8 101.8 L200.5 99.3 Z" fill="#2050c0"/><path d="M208.2 96.8 L210.4 99.3 L208.2 101.8 L205.9 99.3 Z" fill="#2050c0"/><path d="M213.6 96.8 L215.8 99.3 L213.6 101.8 L211.3 99.3 Z" fill="#a02090"/><path d="M216.3 96.8 L218.5 99.3 L216.3 101.8 L214.0 99.3 Z" fill="#4040c0"/><path d="M221.7 96.8 L223.9 99.3 L221.7 101.8 L219.4 99.3 Z" fill="#4040c0"/><path d="M224.4 96.8 L226.6 99.3 L224.4 101.8 L222.1 99.3 Z" fill="#4040c0"/><path d="M227.1 96.8 L229.3 99.3 L227.1 101.8 L224.8 99.3 Z" fill="#2050c0"/><path d="M229.8 96.8 L232.0 99.3 L229.8 101.8 L227.5 99.3 Z" fill="#c030b0"/><path d="M232.5 96.8 L234.7 99.3 L232.5 101.8 L230.2 99.3 Z" fill="#2050c0"/><path d="M240.6 96.8 L242.8 99.3 L240.6 101.8 L238.3 99.3 Z" fill="#2050c0"/><path d="M243.3 96.8 L245.5 99.3 L243.3 101.8 L241.0 99.3 Z" fill="#4040c0"/><path d="M246.0 96.8 L248.2 99.3 L246.0 101.8 L243.7 99.3 Z" fill="#2050c0"/><path d="M251.4 96.8 L253.6 99.3 L251.4 101.8 L249.1 99.3 Z" fill="#4040c0"/><path d="M254.1 96.8 L256.3 99.3 L254.1 101.8 L251.8 99.3 Z" fill="#3050d0"/><path d="M256.8 96.8 L259.0 99.3 L256.8 101.8 L254.5 99.3 Z" fill="#4040c0"/><path d="M262.2 96.8 L264.4 99.3 L262.2 101.8 L259.9 99.3 Z" fill="#2050c0"/><path d="M264.9 96.8 L267.1 99.3 L264.9 101.8 L262.6 99.3 Z" fill="#2050c0"/><path d="M267.6 96.8 L269.8 99.3 L267.6 101.8 L265.3 99.3 Z" fill="#2050c0"/><path d="M270.3 96.8 L272.5 99.3 L270.3 101.8 L268.0 99.3 Z" fill="#3050d0"/><path d="M273.0 96.8 L275.2 99.3 L273.0 101.8 L270.7 99.3 Z" fill="#c030b0"/><path d="M281.1 96.8 L283.3 99.3 L281.1 101.8 L278.8 99.3 Z" fill="#4040c0"/><path d="M283.8 96.8 L286.0 99.3 L283.8 101.8 L281.5 99.3 Z" fill="#4040c0"/><path d="M297.3 96.8 L299.5 99.3 L297.3 101.8 L295.0 99.3 Z" fill="#2050c0"/><path d="M302.7 96.8 L304.9 99.3 L302.7 101.8 L300.4 99.3 Z" fill="#4040c0"/><path d="M32.0 101.1 L34.2 103.6 L32.0 106.1 L29.8 103.6 Z" fill="#208060"/><path d="M34.7 101.1 L37.0 103.6 L34.7 106.1 L32.5 103.6 Z" fill="#208060"/><path d="M37.4 101.1 L39.7 103.6 L37.4 106.1 L35.2 103.6 Z" fill="#208060"/><path d="M40.1 101.1 L42.4 103.6 L40.1 106.1 L37.9 103.6 Z" fill="#208060"/><path d="M42.8 101.1 L45.1 103.6 L42.8 106.1 L40.6 103.6 Z" fill="#309050"/><path d="M45.5 101.1 L47.8 103.6 L45.5 106.1 L43.3 103.6 Z" fill="#309050"/><path d="M48.2 101.1 L50.5 103.6 L48.2 106.1 L46.0 103.6 Z" fill="#309050"/><path d="M50.9 101.1 L53.2 103.6 L50.9 106.1 L48.7 103.6 Z" fill="#106050"/><path d="M53.6 101.1 L55.9 103.6 L53.6 106.1 L51.4 103.6 Z" fill="#309050"/><path d="M56.3 101.1 L58.6 103.6 L56.3 106.1 L54.1 103.6 Z" fill="#309050"/><path d="M59.0 101.1 L61.3 103.6 L59.0 106.1 L56.8 103.6 Z" fill="#208060"/><path d="M61.7 101.1 L64.0 103.6 L61.7 106.1 L59.5 103.6 Z" fill="#208060"/><path d="M64.4 101.1 L66.7 103.6 L64.4 106.1 L62.2 103.6 Z" fill="#309050"/><path d="M67.1 101.1 L69.4 103.6 L67.1 106.1 L64.9 103.6 Z" fill="#106050"/><path d="M69.8 101.1 L72.1 103.6 L69.8 106.1 L67.6 103.6 Z" fill="#106050"/><path d="M165.0 101.1 L167.2 103.6 L165.0 106.1 L162.8 103.6 Z" fill="#405090"/><path d="M167.7 101.1 L169.9 103.6 L167.7 106.1 L165.4 103.6 Z" fill="#303a90"/><path d="M170.4 101.1 L172.6 103.6 L170.4 106.1 L168.1 103.6 Z" fill="#405090"/><path d="M173.1 101.1 L175.3 103.6 L173.1 106.1 L170.8 103.6 Z" fill="#405090"/><path d="M175.8 101.1 L178.0 103.6 L175.8 106.1 L173.5 103.6 Z" fill="#405090"/><path d="M178.5 101.1 L180.7 103.6 L178.5 106.1 L176.2 103.6 Z" fill="#303a90"/><path d="M181.2 101.1 L183.4 103.6 L181.2 106.1 L178.9 103.6 Z" fill="#303a90"/><path d="M183.9 101.1 L186.1 103.6 L183.9 106.1 L181.6 103.6 Z" fill="#303a90"/><path d="M250.0 101.1 L252.2 103.6 L250.0 106.1 L247.8 103.6 Z" fill="#3050a0"/><path d="M252.7 101.1 L254.9 103.6 L252.7 106.1 L250.4 103.6 Z" fill="#3050a0"/><path d="M255.4 101.1 L257.6 103.6 L255.4 106.1 L253.1 103.6 Z" fill="#3050a0"/><path d="M274.3 101.1 L276.5 103.6 L274.3 106.1 L272.0 103.6 Z" fill="#3050a0"/><path d="M287.8 101.1 L290.0 103.6 L287.8 106.1 L285.5 103.6 Z" fill="#4060d0"/><path d="M301.3 101.1 L303.5 103.6 L301.3 106.1 L299.0 103.6 Z" fill="#3050a0"/><path d="M304.0 101.1 L306.2 103.6 L304.0 106.1 L301.7 103.6 Z" fill="#3050a0"/><path d="M19.0 105.4 L21.2 107.9 L19.0 110.4 L16.8 107.9 Z" fill="#7010c0"/><path d="M21.7 105.4 L23.9 107.9 L21.7 110.4 L19.4 107.9 Z" fill="#3040c0"/><path d="M24.4 105.4 L26.6 107.9 L24.4 110.4 L22.1 107.9 Z" fill="#3040c0"/><path d="M27.1 105.4 L29.3 107.9 L27.1 110.4 L24.8 107.9 Z" fill="#7010c0"/><path d="M29.8 105.4 L32.0 107.9 L29.8 110.4 L27.5 107.9 Z" fill="#d0c030"/><path d="M32.5 105.4 L34.8 107.9 L32.5 110.4 L30.2 107.9 Z" fill="#3040c0"/><path d="M35.2 105.4 L37.5 107.9 L35.2 110.4 L33.0 107.9 Z" fill="#c020c0"/><path d="M37.9 105.4 L40.2 107.9 L37.9 110.4 L35.7 107.9 Z" fill="#d0c030"/><path d="M40.6 105.4 L42.9 107.9 L40.6 110.4 L38.4 107.9 Z" fill="#3040c0"/><path d="M43.3 105.4 L45.6 107.9 L43.3 110.4 L41.1 107.9 Z" fill="#7010c0"/><path d="M46.0 105.4 L48.3 107.9 L46.0 110.4 L43.8 107.9 Z" fill="#c020c0"/><path d="M48.7 105.4 L51.0 107.9 L48.7 110.4 L46.5 107.9 Z" fill="#3040c0"/><path d="M51.4 105.4 L53.7 107.9 L51.4 110.4 L49.2 107.9 Z" fill="#209060"/><path d="M54.1 105.4 L56.4 107.9 L54.1 110.4 L51.9 107.9 Z" fill="#c020c0"/><path d="M56.8 105.4 L59.1 107.9 L56.8 110.4 L54.6 107.9 Z" fill="#7010c0"/><path d="M59.5 105.4 L61.8 107.9 L59.5 110.4 L57.3 107.9 Z" fill="#7010c0"/><path d="M62.2 105.4 L64.5 107.9 L62.2 110.4 L60.0 107.9 Z" fill="#d0c030"/><path d="M64.9 105.4 L67.2 107.9 L64.9 110.4 L62.7 107.9 Z" fill="#d0c030"/><path d="M67.6 105.4 L69.9 107.9 L67.6 110.4 L65.4 107.9 Z" fill="#8020d0"/><path d="M70.3 105.4 L72.6 107.9 L70.3 110.4 L68.1 107.9 Z" fill="#7010c0"/><path d="M92.0 105.4 L94.2 107.9 L92.0 110.4 L89.8 107.9 Z" fill="#e070a0"/><path d="M94.7 105.4 L97.0 107.9 L94.7 110.4 L92.5 107.9 Z" fill="#e070a0"/><path d="M97.4 105.4 L99.7 107.9 L97.4 110.4 L95.2 107.9 Z" fill="#e06090"/><path d="M100.1 105.4 L102.4 107.9 L100.1 110.4 L97.9 107.9 Z" fill="#e06090"/><path d="M102.8 105.4 L105.1 107.9 L102.8 110.4 L100.6 107.9 Z" fill="#e06090"/><path d="M105.5 105.4 L107.8 107.9 L105.5 110.4 L103.3 107.9 Z" fill="#e06090"/><path d="M116.0 105.4 L118.2 107.9 L116.0 110.4 L113.8 107.9 Z" fill="#d03070"/><path d="M118.7 105.4 L121.0 107.9 L118.7 110.4 L116.5 107.9 Z" fill="#c04050"/><path d="M121.4 105.4 L123.7 107.9 L121.4 110.4 L119.2 107.9 Z" fill="#c04050"/><path d="M124.1 105.4 L126.4 107.9 L124.1 110.4 L121.9 107.9 Z" fill="#c04050"/><path d="M126.8 105.4 L129.1 107.9 L126.8 110.4 L124.6 107.9 Z" fill="#803070"/><path d="M129.5 105.4 L131.8 107.9 L129.5 110.4 L127.2 107.9 Z" fill="#d03070"/><path d="M132.2 105.4 L134.4 107.9 L132.2 110.4 L129.9 107.9 Z" fill="#803070"/><path d="M137.6 105.4 L139.8 107.9 L137.6 110.4 L135.3 107.9 Z" fill="#c020c0"/><path d="M140.3 105.4 L142.5 107.9 L140.3 110.4 L138.0 107.9 Z" fill="#d03070"/><path d="M143.0 105.4 L145.2 107.9 L143.0 110.4 L140.7 107.9 Z" fill="#c04050"/><path d="M145.7 105.4 L147.9 107.9 L145.7 110.4 L143.4 107.9 Z" fill="#c04050"/><path d="M148.4 105.4 L150.6 107.9 L148.4 110.4 L146.1 107.9 Z" fill="#a02090"/><path d="M151.1 105.4 L153.3 107.9 L151.1 110.4 L148.8 107.9 Z" fill="#d03070"/><path d="M153.8 105.4 L156.0 107.9 L153.8 110.4 L151.5 107.9 Z" fill="#d03070"/><path d="M156.5 105.4 L158.7 107.9 L156.5 110.4 L154.2 107.9 Z" fill="#a02090"/><path d="M159.2 105.4 L161.4 107.9 L159.2 110.4 L156.9 107.9 Z" fill="#c04050"/><path d="M161.9 105.4 L164.1 107.9 L161.9 110.4 L159.6 107.9 Z" fill="#a02090"/><path d="M164.6 105.4 L166.8 107.9 L164.6 110.4 L162.3 107.9 Z" fill="#a02090"/><path d="M170.0 105.4 L172.2 107.9 L170.0 110.4 L167.7 107.9 Z" fill="#803070"/><path d="M172.7 105.4 L174.9 107.9 L172.7 110.4 L170.4 107.9 Z" fill="#a02090"/><path d="M175.4 105.4 L177.6 107.9 L175.4 110.4 L173.1 107.9 Z" fill="#c04050"/><path d="M178.1 105.4 L180.3 107.9 L178.1 110.4 L175.8 107.9 Z" fill="#c04050"/><path d="M180.8 105.4 L183.0 107.9 L180.8 110.4 L178.5 107.9 Z" fill="#c04050"/><path d="M183.5 105.4 L185.7 107.9 L183.5 110.4 L181.2 107.9 Z" fill="#c04050"/><path d="M188.7 105.4 L190.9 107.9 L188.7 110.4 L186.4 107.9 Z" fill="#4060c0"/><path d="M194.1 105.4 L196.3 107.9 L194.1 110.4 L191.8 107.9 Z" fill="#305090"/><path d="M196.8 105.4 L199.0 107.9 L196.8 110.4 L194.5 107.9 Z" fill="#c03070"/><path d="M199.5 105.4 L201.7 107.9 L199.5 110.4 L197.2 107.9 Z" fill="#4060c0"/><path d="M202.2 105.4 L204.4 107.9 L202.2 110.4 L199.9 107.9 Z" fill="#305090"/><path d="M204.9 105.4 L207.1 107.9 L204.9 110.4 L202.6 107.9 Z" fill="#c03070"/><path d="M221.1 105.4 L223.3 107.9 L221.1 110.4 L218.8 107.9 Z" fill="#c03070"/><path d="M226.5 105.4 L228.7 107.9 L226.5 110.4 L224.2 107.9 Z" fill="#c03070"/><path d="M229.2 105.4 L231.4 107.9 L229.2 110.4 L226.9 107.9 Z" fill="#4060c0"/><path d="M240.0 105.4 L242.2 107.9 L240.0 110.4 L237.7 107.9 Z" fill="#6050c0"/><path d="M253.5 105.4 L255.7 107.9 L253.5 110.4 L251.2 107.9 Z" fill="#4060c0"/><path d="M267.0 105.4 L269.2 107.9 L267.0 110.4 L264.7 107.9 Z" fill="#c03070"/><path d="M272.4 105.4 L274.6 107.9 L272.4 110.4 L270.1 107.9 Z" fill="#4060c0"/><path d="M280.5 105.4 L282.7 107.9 L280.5 110.4 L278.2 107.9 Z" fill="#305090"/><path d="M288.6 105.4 L290.8 107.9 L288.6 110.4 L286.3 107.9 Z" fill="#305090"/><path d="M294.0 105.4 L296.2 107.9 L294.0 110.4 L291.7 107.9 Z" fill="#c03070"/><path d="M296.7 105.4 L298.9 107.9 L296.7 110.4 L294.4 107.9 Z" fill="#305090"/><path d="M24.7 109.7 L26.9 112.2 L24.7 114.7 L22.4 112.2 Z" fill="#406080"/><path d="M43.6 109.7 L45.9 112.2 L43.6 114.7 L41.4 112.2 Z" fill="#80a040"/><path d="M46.3 109.7 L48.6 112.2 L46.3 114.7 L44.1 112.2 Z" fill="#80a040"/><path d="M49.0 109.7 L51.3 112.2 L49.0 114.7 L46.8 112.2 Z" fill="#406080"/><path d="M54.4 109.7 L56.7 112.2 L54.4 114.7 L52.2 112.2 Z" fill="#406080"/><path d="M57.1 109.7 L59.4 112.2 L57.1 114.7 L54.9 112.2 Z" fill="#309050"/><path d="M59.8 109.7 L62.1 112.2 L59.8 114.7 L57.6 112.2 Z" fill="#80a040"/><path d="M19.0 114.0 L21.2 116.5 L19.0 119.0 L16.8 116.5 Z" fill="#1a3a6a"/><path d="M21.7 114.0 L23.9 116.5 L21.7 119.0 L19.4 116.5 Z" fill="#2050a0"/><path d="M24.4 114.0 L26.6 116.5 L24.4 119.0 L22.1 116.5 Z" fill="#1a3a6a"/><path d="M27.1 114.0 L29.3 116.5 L27.1 119.0 L24.8 116.5 Z" fill="#2050a0"/><path d="M29.8 114.0 L32.0 116.5 L29.8 119.0 L27.5 116.5 Z" fill="#a0a030"/><path d="M32.5 114.0 L34.8 116.5 L32.5 119.0 L30.2 116.5 Z" fill="#203080"/><path d="M35.2 114.0 L37.5 116.5 L35.2 119.0 L33.0 116.5 Z" fill="#a0a030"/><path d="M37.9 114.0 L40.2 116.5 L37.9 119.0 L35.7 116.5 Z" fill="#105050"/><path d="M40.6 114.0 L42.9 116.5 L40.6 119.0 L38.4 116.5 Z" fill="#2050a0"/><path d="M43.3 114.0 L45.6 116.5 L43.3 119.0 L41.1 116.5 Z" fill="#206060"/><path d="M46.0 114.0 L48.3 116.5 L46.0 119.0 L43.8 116.5 Z" fill="#1a3a6a"/><path d="M48.7 114.0 L51.0 116.5 L48.7 119.0 L46.5 116.5 Z" fill="#1a3a6a"/><path d="M51.4 114.0 L53.7 116.5 L51.4 119.0 L49.2 116.5 Z" fill="#a0a030"/><path d="M54.1 114.0 L56.4 116.5 L54.1 119.0 L51.9 116.5 Z" fill="#105050"/><path d="M56.8 114.0 L59.1 116.5 L56.8 119.0 L54.6 116.5 Z" fill="#a0a030"/><path d="M59.5 114.0 L61.8 116.5 L59.5 119.0 L57.3 116.5 Z" fill="#1a3a6a"/><path d="M62.2 114.0 L64.5 116.5 L62.2 119.0 L60.0 116.5 Z" fill="#1a3a6a"/><path d="M64.9 114.0 L67.2 116.5 L64.9 119.0 L62.7 116.5 Z" fill="#206060"/><path d="M67.6 114.0 L69.9 116.5 L67.6 119.0 L65.4 116.5 Z" fill="#1a3a6a"/><path d="M70.3 114.0 L72.6 116.5 L70.3 119.0 L68.1 116.5 Z" fill="#a0a030"/><path d="M92.0 114.0 L94.2 116.5 L92.0 119.0 L89.8 116.5 Z" fill="#e070a0"/><path d="M94.7 114.0 L97.0 116.5 L94.7 119.0 L92.5 116.5 Z" fill="#e070a0"/><path d="M97.4 114.0 L99.7 116.5 L97.4 119.0 L95.2 116.5 Z" fill="#e070a0"/><path d="M100.1 114.0 L102.4 116.5 L100.1 119.0 L97.9 116.5 Z" fill="#e070a0"/><path d="M102.8 114.0 L105.1 116.5 L102.8 119.0 L100.6 116.5 Z" fill="#e070a0"/><path d="M124.7 114.0 L127.0 116.5 L124.7 119.0 L122.5 116.5 Z" fill="#3050a0"/><path d="M135.5 114.0 L137.7 116.5 L135.5 119.0 L133.2 116.5 Z" fill="#905060"/><path d="M146.0 114.0 L148.2 116.5 L146.0 119.0 L143.8 116.5 Z" fill="#406080"/><path d="M151.4 114.0 L153.6 116.5 L151.4 119.0 L149.1 116.5 Z" fill="#406080"/><path d="M154.1 114.0 L156.3 116.5 L154.1 119.0 L151.8 116.5 Z" fill="#507090"/><path d="M156.8 114.0 L159.0 116.5 L156.8 119.0 L154.5 116.5 Z" fill="#507090"/><path d="M165.0 114.0 L167.2 116.5 L165.0 119.0 L162.8 116.5 Z" fill="#303a80"/><path d="M167.7 114.0 L169.9 116.5 L167.7 119.0 L165.4 116.5 Z" fill="#406080"/><path d="M170.4 114.0 L172.6 116.5 L170.4 119.0 L168.1 116.5 Z" fill="#406080"/><path d="M173.1 114.0 L175.3 116.5 L173.1 119.0 L170.8 116.5 Z" fill="#406080"/><path d="M175.8 114.0 L178.0 116.5 L175.8 119.0 L173.5 116.5 Z" fill="#406080"/><path d="M178.5 114.0 L180.7 116.5 L178.5 119.0 L176.2 116.5 Z" fill="#406080"/><path d="M181.2 114.0 L183.4 116.5 L181.2 119.0 L178.9 116.5 Z" fill="#303a80"/><path d="M183.9 114.0 L186.1 116.5 L183.9 119.0 L181.6 116.5 Z" fill="#303a80"/><path d="M260.1 114.0 L262.3 116.5 L260.1 119.0 L257.8 116.5 Z" fill="#404090"/><path d="M262.8 114.0 L265.0 116.5 L262.8 119.0 L260.5 116.5 Z" fill="#506080"/><path d="M265.5 114.0 L267.7 116.5 L265.5 119.0 L263.2 116.5 Z" fill="#404090"/><path d="M296.0 114.0 L298.2 116.5 L296.0 119.0 L293.8 116.5 Z" fill="#404070"/><path d="M298.7 114.0 L300.9 116.5 L298.7 119.0 L296.4 116.5 Z" fill="#404070"/><path d="M301.4 114.0 L303.6 116.5 L301.4 119.0 L299.1 116.5 Z" fill="#404070"/></g></svg></div>
<div style="left:21px;top:276px;width:4px;height:2.5px;background:#b0209a;"></div>
<div style="left:18px;top:280.5px;width:3px;height:2.5px;background:#b0209a;"></div>
<div style="left:92px;top:276px;width:9.5px;height:2.5px;background:#b0209a;"></div>
<div style="left:93px;top:284.6px;width:5px;height:2.5px;background:#b0209a;"></div>
<div style="left:94px;top:289px;width:4px;height:2.5px;background:#b0209a;"></div>
<div style="left:195px;top:271.8px;width:24.3px;height:2.4px;background:#b0209a;"></div>
<div style="left:183px;top:293px;width:3px;height:2.3px;background:#b0209a;"></div>
<div style="left:183px;top:297.2px;width:3px;height:2.3px;background:#b0209a;"></div>
<div style="left:17px;top:334.8px;width:287px;height:2.6px;background:#5522a8;"></div>
<div style="left:17px;top:339.1px;width:5px;height:2.6px;background:#1a1a90;"></div>
<div style="left:22px;top:339.1px;width:4px;height:2.6px;background:#e0d040;"></div>
<div style="left:26px;top:339.1px;width:7px;height:2.6px;background:#2060c0;"></div>
<div style="left:33px;top:339.1px;width:7px;height:2.6px;background:#d0d040;"></div>
<div style="left:40px;top:339.1px;width:6px;height:2.6px;background:#301a90;"></div>
<div style="left:46px;top:339.1px;width:46px;height:2.6px;background:#e020c8;"></div>
<div style="left:92px;top:339.1px;width:14px;height:2.6px;background:#e0a030;"></div>
<div style="left:106px;top:339.1px;width:28px;height:2.6px;background:#30a060;"></div>
<div style="left:134px;top:339.1px;width:22px;height:2.6px;background:#2080c8;"></div>
<div style="left:156px;top:339.1px;width:83px;height:2.6px;background:#a01870;"></div>
<div style="left:239px;top:339.1px;width:61px;height:2.6px;background:#20c0b0;"></div>
<div style="left:300px;top:339.1px;width:4px;height:2.6px;background:#902040;"></div>
<div style="left:17px;top:343.40000000000003px;width:287px;height:2.6px;background:#e020c8;"></div>
<div style="left:17px;top:347.7px;width:287px;height:3px;background:#4a1ab0;"></div>
<div style="left:17px;top:352.0px;width:287px;height:3px;background:#180a70;"></div>
<div style="left:17px;top:356.3px;width:287px;height:3px;background:#5a20b0;"></div>
<div style="left:17px;top:360.6px;width:287px;height:3px;background:#1a10a0;"></div>
<div style="left:17px;top:364.90000000000003px;width:287px;height:3.2px;background:#e0d020;"></div>
<div style="left:17px;top:369.2px;width:287px;height:3px;background:#20c8c0;"></div>
<div style="left:18px;top:398px;width:1.5px;height:7px;background:#d02040;"></div>
<div style="left:18px;top:402px;width:8px;height:3px;background:#1a2090;"></div>
<div style="left:18px;top:404px;width:3px;height:2px;background:#d02040;"></div>
<div style="left:104px;top:398.5px;width:1px;height:3px;background:#1a2090;"></div>
<div style="left:19px;top:462px;width:1px;height:1.5px;background:#3050d0;"></div>
<div style="left:19px;top:465px;width:1px;height:1.5px;background:#3050d0;"></div>
<div style="left:19px;top:468px;width:1px;height:1.5px;background:#3050d0;"></div>
<div style="left:19px;top:471px;width:1px;height:1.5px;background:#3050d0;"></div>
<div style="left:19px;top:475px;width:18px;height:3px;background:#d03020;"></div>
<div style="left:36.5px;top:479.5px;width:224px;height:2.5px;background:#1aa040;"></div>
<div style="left:297.5px;top:479.5px;width:6.5px;height:2.5px;background:#1aa040;"></div>
<div style="left:179px;top:484.5px;width:1.5px;height:1.5px;background:#111;"></div>
<div style="left:260px;top:488.3px;width:38.5px;height:2.6px;background:#b0a020;"></div>
<div style="left:17px;top:526px;width:108px;height:2.6px;background:#e02030;"></div>
<div style="left:125px;top:526px;width:179px;height:2.6px;background:#a07820;"></div>
<div style="left:17px;top:530.3px;width:287px;height:2.6px;background:#101a80;"></div>
<div style="left:17px;top:534.6px;width:287px;height:2.6px;background:#70a030;"></div>
<div style="left:17px;top:538.9px;width:35px;height:2.6px;background:#d02080;"></div>
<div style="left:52px;top:538.9px;width:8px;height:2.6px;background:#30b0e0;"></div>
<div style="left:60px;top:538.9px;width:10px;height:2.6px;background:#2040c0;"></div>
<div style="left:17px;top:543.2px;width:287px;height:3px;background:#a05020;"></div>
<div style="left:17px;top:547.5px;width:287px;height:3px;background:#d8d850;"></div>
<div style="left:17px;top:551.8px;width:287px;height:3px;background:#d0b040;"></div>
<div style="left:17px;top:556.1px;width:287px;height:3px;background:#30107a;"></div>
<div style="left:17px;top:560.4px;width:287px;height:3px;background:#d4b050;"></div>
<div style="left:33.5px;top:653.3px;width:270.5px;height:2.6px;background:#c020c0;"></div>
<div style="left:17px;top:657.5999999999999px;width:287px;height:2.6px;background:#c010c0;"></div>
<div style="left:17px;top:661.9px;width:287px;height:2.6px;background:#8020a0;"></div>
<div style="left:17px;top:666.1999999999999px;width:287px;height:2.6px;background:#d02060;"></div>
<div style="left:17px;top:670.5px;width:53px;height:2.6px;background:#70c030;"></div>
<div style="left:42.5px;top:675px;width:1.5px;height:1.5px;background:#222;"></div>
<div style="left:17px;top:679.0999999999999px;width:287px;height:2.6px;background:#a020a0;"></div>
<div style="left:40px;top:683.4px;width:264px;height:2.6px;background:#70c020;"></div>
<div style="left:43.5px;top:688.5px;width:1.5px;height:1.5px;background:#222;"></div>
<svg style="left:0px;top:0px" width="1" height="1"><polyline points="18,754 18.5,718 22,738 25,748 27,740 29,751 31,745 34,742 36,747 39,737 42,738 45,746 48,749 51,747 54,744 57,748 60,744 62,747 64,748 67,751 70,754 74,747 77,753 80,754 88,754 90,748 93,750 96,752 100,753 103,751 108,752 112,754 120,749 123,754 128,752 132,754 137,753 140,752 145,750 150,752 155,753 160,751 165,738 170,736 175,740 178,734 181,747 184,753 190,753 196,749 198,752 201,748 204,753 208,754 230,754 233,749 236,754 290,754 295,744 297,738 300,739 303,747" fill="none" stroke="#2a3a9a" stroke-width="1"/><polyline points="18,754 20,730 23,742 26,745 30,749 33,746 36,742 39,743 41,748 45,749 50,751 56,748 60,750 66,751 70,754 100,752 160,752 165,742 170,741 178,738 181,750 185,754 295,754 298,745 303,750" fill="none" stroke="#4050c0" stroke-width="1"/><polyline points="18,751 22,749 30,752 38,749 45,751 60,752 80,754 165,751 170,748 178,746 181,752 185,754 298,752 303,751" fill="none" stroke="#d04070" stroke-width="1.2"/></svg>
<div style="left:17px;top:780.5px;width:287px;height:3px;background:#0a1490;"></div>
<div style="left:17px;top:785px;width:27px;height:2.5px;background:#a06030;"></div>
<div style="left:44px;top:785px;width:26px;height:2.5px;background:#9020a0;"></div>
<div style="left:239px;top:785px;width:61px;height:2.5px;background:#20a0c8;"></div>
<svg style="left:0px;top:0px" width="1" height="1"><polyline points="576.0,454.6 1608.0,454.6" fill="none" stroke="#8c9a78" stroke-width="0.9" stroke-linejoin="round"/><polyline points="576.0,456.6 1608.0,456.6" fill="none" stroke="#78b058" stroke-width="2.2" stroke-linejoin="round"/><polyline points="576.0,460.2 1608.0,460.2" fill="none" stroke="#4a1a9a" stroke-width="2.6" stroke-linejoin="round"/><polyline points="576.0,462.2 1608.0,462.2" fill="none" stroke="#a050a0" stroke-width="1.08" stroke-linejoin="round"/><polyline points="576.0,464.8 1608.0,464.8" fill="none" stroke="#3a8a50" stroke-width="2.4" stroke-linejoin="round"/><polyline points="576.0,466.8 1608.0,466.8" fill="none" stroke="#c05040" stroke-width="1.08" stroke-linejoin="round"/><polyline points="576.0,468.8 1608.0,468.8" fill="none" stroke="#b85a70" stroke-width="2.6" stroke-linejoin="round"/><polyline points="1080.0,468.8 1608.0,468.8" fill="none" stroke="#b8703f" stroke-width="2.6" stroke-linejoin="round"/><polyline points="576.0,469.8 900.0,469.8" fill="none" stroke="#2a3aa0" stroke-width="1.08" stroke-linejoin="round"/><polyline points="576.0,458.4 1608.0,458.4" fill="none" stroke="#dde9f6" stroke-width="0.7200000000000001" stroke-linejoin="round"/><polyline points="576.0,471.0 1608.0,471.0" fill="none" stroke="#e4eef8" stroke-width="0.81" stroke-linejoin="round"/><polyline points="576.0,451.0 1495.0,451.0 1498.0,453.3 1608.0,453.3" fill="none" stroke="#3a4ad0" stroke-width="1.26" stroke-linejoin="round"/><polyline points="1498.0,453.3 1608.0,453.3" fill="none" stroke="#101a60" stroke-width="1.26" stroke-linejoin="round"/><polyline points="576.0,384.4 589.0,384.4 592.0,386.9 620.0,387.0 625.0,388.5 632.0,388.5 640.0,386.5 660.0,386.5 668.0,387.5 680.0,387.5 695.0,385.5 720.0,384.8 772.0,384.5 790.0,385.5 820.0,385.2 848.0,385.2 852.0,382.0 866.0,382.0 870.0,384.0 910.0,384.0 940.0,383.0 954.0,382.5 957.0,378.5 972.0,378.5 975.0,382.0 1030.0,381.5 1035.0,380.0 1048.0,380.0 1052.0,381.0 1080.0,380.5 1140.0,379.0 1160.0,378.0 1310.0,378.0 1315.0,379.2 1597.0,379.0 1600.0,378.3 1608.0,378.3" fill="none" stroke="#3a58c8" stroke-width="1.26" stroke-linejoin="round"/><polyline points="576.0,427.0 602.0,427.0 604.0,400.2 700.0,401.0 900.0,402.3 1200.0,402.5 1597.0,402.4 1608.0,402.0" fill="none" stroke="#90cc50" stroke-width="1.26" stroke-linejoin="round"/><polyline points="576.0,414.4 586.0,414.4 589.0,408.8 776.0,408.8 778.0,413.6 862.0,413.6 865.0,411.2 880.0,411.2 882.0,408.8 1200.0,408.5 1250.0,407.5 1460.0,407.2 1462.0,406.2 1596.0,406.2 1599.0,400.7 1608.0,400.7" fill="none" stroke="#a84a3a" stroke-width="1.35" stroke-linejoin="round"/><polyline points="776.0,409.6 1000.0,410.0 1330.0,410.4 1597.0,409.2 1600.0,408.4 1608.0,408.4" fill="none" stroke="#2aa048" stroke-width="1.26" stroke-linejoin="round"/><polyline points="576.0,416.7 660.0,416.5 776.0,414.0 880.0,413.6 1080.0,413.0 1330.0,412.0 1597.0,410.6 1608.0,410.2" fill="none" stroke="#40c8a0" stroke-width="1.26" stroke-linejoin="round"/><polyline points="576.0,419.6 1608.0,419.4" fill="none" stroke="#d05060" stroke-width="1.26" stroke-linejoin="round"/><polyline points="576.0,421.0 587.0,421.0 590.0,472.0" fill="none" stroke="#4a40c0" stroke-width="1.26" stroke-linejoin="round"/><polyline points="576.0,430.0 590.0,430.0" fill="none" stroke="#90cc50" stroke-width="1.1700000000000002" stroke-linejoin="round"/><polyline points="576.0,435.3 603.0,435.3 606.0,430.9 820.0,430.9 1080.0,429.3 1150.0,429.0 1155.0,425.8 1170.0,425.8 1173.0,429.0 1597.0,429.2 1600.0,428.4 1608.0,428.4" fill="none" stroke="#40b878" stroke-width="1.26" stroke-linejoin="round"/><polyline points="1080.0,465.0 1108.0,464.0 1110.0,459.3 1123.0,459.3 1125.0,454.5 1138.0,454.5 1140.0,443.5 1153.0,443.5 1155.0,433.3 1168.0,433.3 1171.0,427.4 1330.0,427.4 1430.0,427.0 1432.0,425.0 1596.0,424.0 1599.0,422.4 1608.0,422.4" fill="none" stroke="#b03080" stroke-width="1.26" stroke-linejoin="round"/><polyline points="1050.0,466.0 1090.0,465.6 1093.0,464.0 1105.0,464.0 1107.0,459.0 1120.0,459.0 1122.0,458.5 1150.0,458.5 1153.0,445.0 1168.0,445.0 1171.0,407.0 1185.0,407.0 1187.0,405.7 1245.0,405.7 1248.0,404.0 1293.0,404.0 1295.0,397.3 1430.0,396.5 1460.0,394.0 1462.0,386.3 1597.0,384.6 1599.0,369.8 1608.0,369.8" fill="none" stroke="#d8c040" stroke-width="1.26" stroke-linejoin="round"/><polyline points="576.0,472.0 633.0,472.0 634.5,434.0 651.0,434.0 654.0,441.9 900.0,441.2 1330.0,441.0 1608.0,441.8" fill="none" stroke="#3a3ae0" stroke-width="1.26" stroke-linejoin="round"/><polyline points="576.0,445.0 650.0,445.0 654.0,442.0" fill="none" stroke="#4a90e0" stroke-width="1.1700000000000002" stroke-linejoin="round"/><polyline points="848.0,472.0 852.0,443.5 880.0,443.5 882.0,442.0 1171.0,442.7" fill="none" stroke="#70c050" stroke-width="1.1700000000000002" stroke-linejoin="round"/><polyline points="576.0,464.0 696.0,463.0 698.0,455.5 714.0,455.5 716.0,444.0 728.0,444.0 730.0,435.0 744.0,435.0 746.0,426.0 756.0,426.0 758.0,428.0 764.0,472.0" fill="none" stroke="#1a2a7a" stroke-width="1.26" stroke-linejoin="round"/></svg>
</body></html>
